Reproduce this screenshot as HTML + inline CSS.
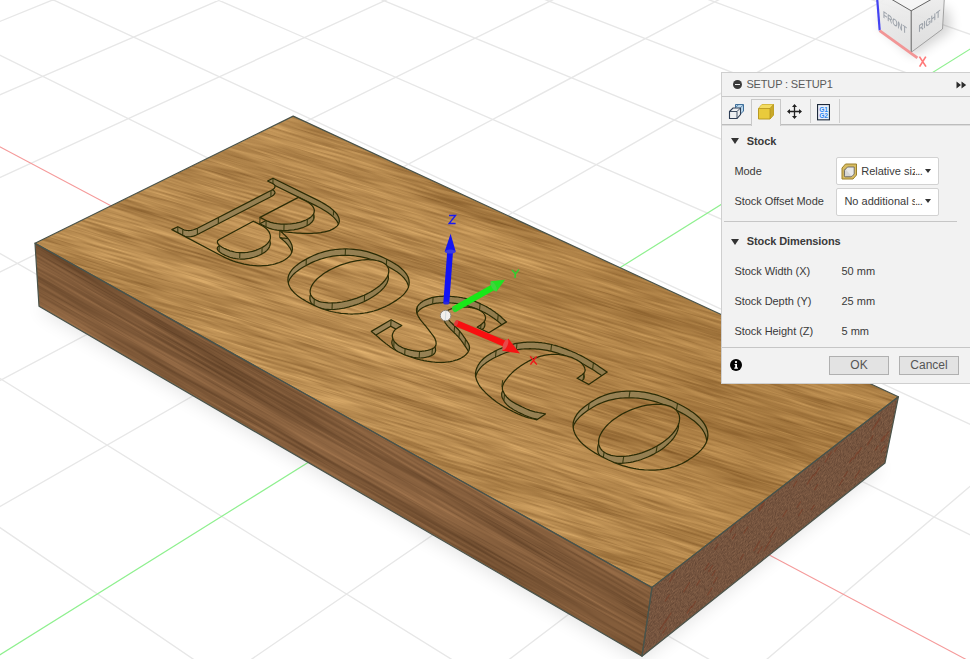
<!DOCTYPE html>
<html><head><meta charset="utf-8"><title>Setup</title>
<style>
html,body{margin:0;padding:0;background:#fff;}
body{width:970px;height:659px;position:relative;overflow:hidden;font-family:"Liberation Sans",sans-serif;}

#panel{position:absolute;left:721px;top:72px;width:260px;height:312px;background:#f2f2f2;border:1px solid #cfcfcf;box-sizing:border-box;font-size:11px;color:#333;}
#panel .title{position:absolute;left:0;top:0;right:0;height:23px;border-bottom:1px solid #c9c9c9;}
#panel .title .t{position:absolute;left:24.4px;top:5px;font-size:11px;color:#5a5a5a;letter-spacing:-0.15px;white-space:nowrap;}
#panel .minus{position:absolute;left:10.6px;top:7px;width:9px;height:9px;border-radius:50%;background:#3a3a3a;}
#panel .minus:after{content:"";position:absolute;left:2px;top:3.75px;width:5px;height:1.5px;background:#f2f2f2;}
#panel .ff{position:absolute;left:234px;top:8px;}
#panel .tabs{position:absolute;left:0;top:24px;right:0;height:27px;border-bottom:1px solid #bdbdbd;box-shadow:0 1px 0 #dcdcdc;}
#panel .tabsel{position:absolute;left:28.6px;top:2px;width:30.5px;height:27px;background:#f2f2f2;border:1px solid #c9c9c9;border-bottom:none;box-sizing:border-box;}
#panel .vsep{position:absolute;top:2px;width:1px;height:24px;background:#cfcfcf;}
#panel .ico{position:absolute;}
#panel .hdr{position:absolute;left:24.8px;font-weight:bold;font-size:11px;color:#3a3a3a;white-space:nowrap;letter-spacing:-0.1px;}
#panel .tri{position:absolute;left:8.8px;width:0;height:0;border-left:4.6px solid transparent;border-right:4.6px solid transparent;border-top:6px solid #333;}
#panel .lbl{position:absolute;left:12.4px;font-size:11px;color:#3a3a3a;white-space:nowrap;letter-spacing:-0.05px;}
#panel .val{position:absolute;left:119.5px;font-size:11px;color:#3a3a3a;white-space:nowrap;}
#panel .dd{position:absolute;left:114px;width:103px;height:27.5px;background:#fff;border:1px solid #d2d2d2;border-radius:2px;box-sizing:border-box;}
#panel .dd .tx{position:absolute;top:6.4px;font-size:11px;color:#3a3a3a;white-space:nowrap;overflow:hidden;}
#panel .dd .dots{position:absolute;top:6.4px;left:77.9px;font-size:11px;color:#3a3a3a;letter-spacing:-0.6px;}
#panel .dd .arr{position:absolute;left:88.4px;top:11.2px;width:0;height:0;border-left:3px solid transparent;border-right:3px solid transparent;border-top:4px solid #333;}
#panel .hsep{position:absolute;height:1px;background:#c6c6c6;}
#panel .btn{position:absolute;top:283px;width:60px;height:19px;background:#e3e3e3;border:1px solid #b0b0b0;box-sizing:border-box;font-size:12px;color:#555;text-align:center;line-height:17px;}
#panel .info{position:absolute;left:7.6px;top:286.4px;width:12px;height:12px;border-radius:50%;background:#000;}

</style></head><body>
<svg width="970" height="659" viewBox="0 0 970 659" style="position:absolute;left:0;top:0">
<defs>
<filter id="fTop" x="0" y="0" width="1" height="1" color-interpolation-filters="sRGB">
<feTurbulence type="fractalNoise" baseFrequency="0.30 4.2" numOctaves="2" seed="7"/>
<feColorMatrix type="matrix" values="1 0 0 0 0  1 0 0 0 0  1 0 0 0 0  0 0 0 0 1" result="fine"/>
<feTurbulence type="fractalNoise" baseFrequency="0.05 0.5" numOctaves="2" seed="23"/>
<feColorMatrix type="matrix" values="1 0 0 0 0  1 0 0 0 0  1 0 0 0 0  0 0 0 0 1" result="broad"/>
<feComposite in="fine" in2="broad" operator="arithmetic" k1="0" k2="0.55" k3="0.45" k4="0"/>
<feColorMatrix type="matrix" values="0.60 0 0 0 0.42  0.56 0 0 0 0.265  0.44 0 0 0 0.095  0 0 0 0 1"/>
</filter>
<filter id="fSide" x="0" y="0" width="1" height="1" color-interpolation-filters="sRGB">
<feTurbulence type="fractalNoise" baseFrequency="0.14 5" numOctaves="2" seed="11"/>
<feColorMatrix type="matrix" values="1 0 0 0 0  1 0 0 0 0  1 0 0 0 0  0 0 0 0 1" result="fine"/>
<feTurbulence type="fractalNoise" baseFrequency="0.03 0.7" numOctaves="2" seed="31"/>
<feColorMatrix type="matrix" values="1 0 0 0 0  1 0 0 0 0  1 0 0 0 0  0 0 0 0 1" result="broad"/>
<feComposite in="fine" in2="broad" operator="arithmetic" k1="0" k2="0.5" k3="0.5" k4="0"/>
<feColorMatrix type="matrix" values="0.50 0 0 0 0.255  0.40 0 0 0 0.155  0.30 0 0 0 0.075  0 0 0 0 1"/>
</filter>
<filter id="fEnd" x="0" y="0" width="1" height="1" color-interpolation-filters="sRGB">
<feTurbulence type="fractalNoise" baseFrequency="7 7" numOctaves="1" seed="5"/>
<feColorMatrix type="matrix" values="0.30 0 0 0 0.31  0.24 0 0 0 0.21  0.18 0 0 0 0.155  0 0 0 0 1"/>
</filter>
<filter id="gsh" x="-10%" y="-10%" width="120%" height="120%"><feGaussianBlur stdDeviation="9"/></filter>
<linearGradient id="topshade" gradientUnits="userSpaceOnUse" x1="343.5" y1="415.3" x2="595.8" y2="256.5"><stop offset="0" stop-color="#6a3c05" stop-opacity="0"/><stop offset="0.45" stop-color="#6a3c05" stop-opacity="0.03"/><stop offset="1" stop-color="#6a3c05" stop-opacity="0.17"/></linearGradient>
<clipPath id="cTop"><polygon points="35,243.2 293.2,116.1 898.4,396.8 652,587.4"/></clipPath>
<clipPath id="cSide"><polygon points="35,243.2 652,587.4 642,656.2 39,306.3"/></clipPath>
<clipPath id="cEnd"><polygon points="652,587.4 898.4,396.8 885,463 642,656.2"/></clipPath>
<linearGradient id="wallg" x1="0" y1="0" x2="1" y2="0"><stop offset="0" stop-color="#9a8458"/><stop offset="1" stop-color="#917b4c"/></linearGradient>
</defs>
<rect width="970" height="659" fill="#fff"/>
<path d="M-5 23.4L64.9 -5 M-5 96.8L231.2 -5 M-5 179.9L397.1 -5 M-5 274.4L562.6 -5 M-5 524.2L200.4 664 M-5 383.1L727.7 -5 M-5 375.4L459.1 664 M-5 509.4L892.4 -5 M-5 250.6L717.2 664 M244.6 664L975 163.3 M-5 52.7L975 537.2 M503.2 664L975 305.7 M42.7 -5L975 426.6 M761.3 664L975 482.1 M206.6 -5L975 329.5 M370.1 -5L975 243.5 M533.3 -5L975 166.8 M696 -5L975 98.1 M858.4 -5L975 36" stroke="#e7e7e7" stroke-width="1.35" fill="none"/>
<path d="M-5 144.3L975 664.2" stroke="#f59a9a" stroke-width="1.1"/>
<path d="M-5 657.9L975 46" stroke="#8ff08f" stroke-width="1.2"/>
<polygon points="37.9,304.9 640.9,657.1 882.5,463.2 291.1,175.7" fill="#000" opacity="0.10" filter="url(#gsh)" transform="translate(0 4)"/>
<!--BLOCK-->
<g clip-path="url(#cSide)"><g transform="matrix(12.0957 6.9215 -0.5467 13.2684 -51.4805 169.0417)"><rect x="0" y="0" width="60" height="8" filter="url(#fSide)"/></g></g>
<g clip-path="url(#cEnd)"><g transform="matrix(9.7180 -7.6723 -2.6812 13.5780 630.4252 589.5351)"><rect x="0" y="0" width="32" height="8" filter="url(#fEnd)"/></g></g>
<g clip-path="url(#cEnd)"><path d="M707.6 594.9L711.9 588.1 M687.1 613.2L691.4 606.3 M872.3 429.9L877.6 421.4 M708.7 571.6L712.6 565.5 M691.9 607.3L695.5 601.5 M874.7 426.6L880.1 417.9 M839.1 485.5L842.8 479.6 M807.2 484.2L813.1 474.9 M854.9 478L859.6 470.5 M814.5 489.7L817.8 484.5 M764.2 550.3L770.4 540.5 M857.7 453.6L861.3 447.8 M867.3 444.9L873 435.7 M853.4 458.9L857.5 452.4 M797.2 507.2L800.4 502 M732.3 538.8L735.2 534.1 M665.2 601.2L669.2 594.9 M782.9 516.5L786.8 510.2 M881.1 452L885 445.6 M705 569.6L708.9 563.4 M743.9 533.1L747.8 526.8 M793.6 486.1L796.7 481.2 M665.1 622.3L671 613 M798.6 515.6L802.4 509.5 M696.8 585.1L699.8 580.4 M825.2 462L831.3 452.1 M834.4 451.6L837.1 447.3 M730 532.4L735.9 523.2 M759.2 510.9L764.4 502.8 M844.2 476.7L847.4 471.5 M757.9 553.1L762 546.5 M875.4 450L878 445.9 M660.2 629.3L666.1 619.9 M740.3 559.3L743.4 554.4 M880.8 441.3L884.1 436.1 M662.8 633.2L666.3 627.6 M811.3 509.8L814.1 505.4 M770.1 537.7L776.5 527.5 M683.7 591.8L689.5 582.5 M759.5 508.4L764.1 501.1 M712.3 575.4L715.2 570.7 M753.8 550.7L759.8 541.1 M849.6 462.4L852.3 458.1 M713.6 583L717.1 577.4 M714.7 549.5L718.1 544.1 M669.6 581.6L674.7 573.4 M882.4 441.1L888.1 432 M814.1 475.9L819.5 467.3" stroke="#7a3520" stroke-width="1.25" stroke-linecap="round" opacity="0.5" fill="none"/></g>
<g clip-path="url(#cTop)"><g transform="matrix(12.1410 6.1670 10.2045 -6.1171 -82.4519 228.4906)"><g transform="rotate(15 30 16)"><rect x="-6" y="-6" width="72" height="44" filter="url(#fTop)"/></g></g></g>
<polygon points="35,243.2 293.2,116.1 898.4,396.8 652,587.4" fill="url(#topshade)"/>
<polygon points="35,243.2 652,587.4 642,656.2 39,306.3" fill="none" stroke="#4a534a" stroke-width="1.2" stroke-linejoin="round"/>
<polygon points="652,587.4 898.4,396.8 885,463 642,656.2" fill="none" stroke="#4a534a" stroke-width="1.2" stroke-linejoin="round"/>
<polygon points="35,243.2 293.2,116.1 898.4,396.8 652,587.4" fill="none" stroke="#4a534a" stroke-width="1.2" stroke-linejoin="round"/>
<!--LETTERS-->
<clipPath id="lc0"><path d="M273 178.3 L316.5 199.6 L319.1 200.9 L321.6 202.2 L323.9 203.6 L326.1 204.9 L328.1 206.3 L330 207.6 L331.7 208.9 L333.2 210.3 L334.6 211.6 L335.8 212.9 L336.9 214.2 L337.7 215.5 L338.4 216.8 L338.9 218.1 L339.2 219.3 L339.3 220.5 L339.3 221.7 L339 222.8 L338.5 224 L337.9 225 L337 226.1 L335.9 227.1 L334.6 228 L333.1 228.9 L331.6 229.7 L330.1 230.3 L328.4 230.9 L326.6 231.4 L324.8 231.8 L322.8 232.2 L320.8 232.6 L318.7 232.8 L316.5 233.1 L314.3 233.2 L312 233.3 L309.6 233.4 L307.3 233.4 L304.8 233.4 L302.4 233.3 L299.9 233.2 L297.4 233.1 L294.9 232.9 L292.4 232.7 L289.9 232.4 L287.3 232.1 L284.9 231.8 L282.4 231.5 L279.9 231.1 L281.3 232.1 L282.6 233.1 L283.8 234.2 L285.1 235.3 L286.2 236.5 L287.3 237.7 L288.3 238.9 L289.3 240.2 L290.1 241.4 L290.8 242.7 L291.4 244 L291.9 245.3 L292.2 246.7 L292.4 248 L292.4 249.3 L292.2 250.7 L291.9 252 L291.3 253.3 L290.6 254.6 L289.6 255.9 L288.4 257.1 L287 258.3 L285.3 259.5 L283.3 260.7 L281.4 261.6 L279.4 262.5 L277.3 263.2 L275.2 263.9 L272.9 264.5 L270.6 264.9 L268.1 265.3 L265.7 265.6 L263.1 265.7 L260.5 265.8 L257.9 265.8 L255.2 265.6 L252.5 265.4 L249.7 265.1 L246.9 264.6 L244.1 264.1 L241.3 263.4 L238.5 262.7 L235.7 261.8 L232.9 260.9 L230.1 259.8 L227.4 258.7 L224.6 257.4 L221.9 256 L171.9 229.6 L177.8 226.7 L182.8 229.3 L183.9 229.8 L185.2 230.2 L186.5 230.4 L188 230.5 L189.5 230.5 L191 230.3 L192.6 230 L194.2 229.5 L195.8 228.9 L197.4 228.2 L271 190.5 L272.4 189.7 L273.5 188.9 L274.3 188.2 L274.8 187.4 L275 186.7 L275 186 L274.8 185.3 L274.3 184.7 L273.5 184.1 L272.6 183.5 L267.6 181Z M260 217.4 L298.4 197.4 L305.6 201 L306.9 201.6 L308.1 202.3 L309.2 203.1 L310.1 203.8 L311 204.5 L311.8 205.3 L312.5 206.1 L313 206.9 L313.5 207.7 L313.9 208.5 L314.1 209.3 L314.3 210.1 L314.3 210.9 L314.2 211.7 L314.1 212.5 L313.8 213.3 L313.4 214.1 L312.9 214.9 L312.2 215.7 L311.5 216.4 L310.6 217.2 L309.7 217.9 L308.6 218.6 L307.4 219.3 L305.9 220 L304.4 220.6 L302.9 221.2 L301.2 221.8 L299.5 222.3 L297.8 222.7 L296 223.1 L294.1 223.4 L292.3 223.7 L290.4 223.9 L288.5 224 L286.6 224.1 L284.7 224.2 L282.8 224.1 L281 224.1 L279.1 223.9 L277.3 223.7 L275.5 223.4 L273.8 223.1 L272.1 222.7 L270.5 222.3 L269 221.7 L267.5 221.2 L266.1 220.5Z M219.7 239.2 L253.3 221.2 L261.3 225.3 L262.6 226 L263.8 226.7 L264.9 227.5 L265.9 228.3 L266.9 229.2 L267.7 230.1 L268.4 231 L269 231.9 L269.5 232.9 L269.9 233.9 L270.2 234.9 L270.4 235.9 L270.4 236.9 L270.4 237.9 L270.2 238.9 L269.8 240 L269.3 241 L268.7 242 L268 242.9 L267.1 243.9 L266.1 244.8 L264.9 245.8 L263.6 246.6 L262.1 247.5 L260.5 248.3 L258.9 249 L257.3 249.7 L255.7 250.3 L254.1 250.8 L252.5 251.3 L250.8 251.7 L249.2 252 L247.6 252.3 L245.9 252.5 L244.3 252.6 L242.7 252.7 L241.1 252.7 L239.4 252.6 L237.8 252.5 L236.2 252.3 L234.6 252 L233.1 251.6 L231.5 251.2 L229.9 250.8 L228.4 250.2 L226.9 249.6 L225.4 248.9 L223.9 248.2 L222.2 247.3 L220.7 246.3 L219.5 245.4 L218.5 244.4 L217.8 243.5 L217.4 242.6 L217.4 241.7 L217.7 240.8 L218.5 240 L219.7 239.2Z" clip-rule="evenodd"/></clipPath>
<g clip-path="url(#lc0)">
<path d="M273 178.3 L316.5 199.6 L319.1 200.9 L321.6 202.2 L323.9 203.6 L326.1 204.9 L328.1 206.3 L330 207.6 L331.7 208.9 L333.2 210.3 L334.6 211.6 L335.8 212.9 L336.9 214.2 L337.7 215.5 L338.4 216.8 L338.9 218.1 L339.2 219.3 L339.3 220.5 L339.3 221.7 L339 222.8 L338.5 224 L337.9 225 L337 226.1 L335.9 227.1 L334.6 228 L333.1 228.9 L331.6 229.7 L330.1 230.3 L328.4 230.9 L326.6 231.4 L324.8 231.8 L322.8 232.2 L320.8 232.6 L318.7 232.8 L316.5 233.1 L314.3 233.2 L312 233.3 L309.6 233.4 L307.3 233.4 L304.8 233.4 L302.4 233.3 L299.9 233.2 L297.4 233.1 L294.9 232.9 L292.4 232.7 L289.9 232.4 L287.3 232.1 L284.9 231.8 L282.4 231.5 L279.9 231.1 L281.3 232.1 L282.6 233.1 L283.8 234.2 L285.1 235.3 L286.2 236.5 L287.3 237.7 L288.3 238.9 L289.3 240.2 L290.1 241.4 L290.8 242.7 L291.4 244 L291.9 245.3 L292.2 246.7 L292.4 248 L292.4 249.3 L292.2 250.7 L291.9 252 L291.3 253.3 L290.6 254.6 L289.6 255.9 L288.4 257.1 L287 258.3 L285.3 259.5 L283.3 260.7 L281.4 261.6 L279.4 262.5 L277.3 263.2 L275.2 263.9 L272.9 264.5 L270.6 264.9 L268.1 265.3 L265.7 265.6 L263.1 265.7 L260.5 265.8 L257.9 265.8 L255.2 265.6 L252.5 265.4 L249.7 265.1 L246.9 264.6 L244.1 264.1 L241.3 263.4 L238.5 262.7 L235.7 261.8 L232.9 260.9 L230.1 259.8 L227.4 258.7 L224.6 257.4 L221.9 256 L171.9 229.6 L177.8 226.7 L182.8 229.3 L183.9 229.8 L185.2 230.2 L186.5 230.4 L188 230.5 L189.5 230.5 L191 230.3 L192.6 230 L194.2 229.5 L195.8 228.9 L197.4 228.2 L271 190.5 L272.4 189.7 L273.5 188.9 L274.3 188.2 L274.8 187.4 L275 186.7 L275 186 L274.8 185.3 L274.3 184.7 L273.5 184.1 L272.6 183.5 L267.6 181Z M260 217.4 L298.4 197.4 L305.6 201 L306.9 201.6 L308.1 202.3 L309.2 203.1 L310.1 203.8 L311 204.5 L311.8 205.3 L312.5 206.1 L313 206.9 L313.5 207.7 L313.9 208.5 L314.1 209.3 L314.3 210.1 L314.3 210.9 L314.2 211.7 L314.1 212.5 L313.8 213.3 L313.4 214.1 L312.9 214.9 L312.2 215.7 L311.5 216.4 L310.6 217.2 L309.7 217.9 L308.6 218.6 L307.4 219.3 L305.9 220 L304.4 220.6 L302.9 221.2 L301.2 221.8 L299.5 222.3 L297.8 222.7 L296 223.1 L294.1 223.4 L292.3 223.7 L290.4 223.9 L288.5 224 L286.6 224.1 L284.7 224.2 L282.8 224.1 L281 224.1 L279.1 223.9 L277.3 223.7 L275.5 223.4 L273.8 223.1 L272.1 222.7 L270.5 222.3 L269 221.7 L267.5 221.2 L266.1 220.5Z M219.7 239.2 L253.3 221.2 L261.3 225.3 L262.6 226 L263.8 226.7 L264.9 227.5 L265.9 228.3 L266.9 229.2 L267.7 230.1 L268.4 231 L269 231.9 L269.5 232.9 L269.9 233.9 L270.2 234.9 L270.4 235.9 L270.4 236.9 L270.4 237.9 L270.2 238.9 L269.8 240 L269.3 241 L268.7 242 L268 242.9 L267.1 243.9 L266.1 244.8 L264.9 245.8 L263.6 246.6 L262.1 247.5 L260.5 248.3 L258.9 249 L257.3 249.7 L255.7 250.3 L254.1 250.8 L252.5 251.3 L250.8 251.7 L249.2 252 L247.6 252.3 L245.9 252.5 L244.3 252.6 L242.7 252.7 L241.1 252.7 L239.4 252.6 L237.8 252.5 L236.2 252.3 L234.6 252 L233.1 251.6 L231.5 251.2 L229.9 250.8 L228.4 250.2 L226.9 249.6 L225.4 248.9 L223.9 248.2 L222.2 247.3 L220.7 246.3 L219.5 245.4 L218.5 244.4 L217.8 243.5 L217.4 242.6 L217.4 241.7 L217.7 240.8 L218.5 240 L219.7 239.2Z M272.9 184.5 L316.3 205.9 L318.9 207.2 L321.3 208.5 L323.7 209.9 L325.8 211.2 L327.8 212.6 L329.7 213.9 L331.4 215.3 L332.9 216.6 L334.3 217.9 L335.5 219.3 L336.6 220.6 L337.4 221.9 L338.1 223.2 L338.6 224.4 L338.9 225.6 L339 226.9 L339 228 L338.7 229.2 L338.2 230.3 L337.6 231.4 L336.7 232.4 L335.6 233.4 L334.3 234.4 L332.8 235.3 L331.3 236 L329.8 236.7 L328.1 237.2 L326.4 237.8 L324.5 238.2 L322.6 238.6 L320.5 238.9 L318.4 239.2 L316.3 239.4 L314 239.6 L311.7 239.7 L309.4 239.8 L307 239.8 L304.6 239.8 L302.1 239.7 L299.7 239.6 L297.2 239.5 L294.7 239.3 L292.2 239.1 L289.6 238.8 L287.1 238.5 L284.7 238.2 L282.2 237.9 L279.7 237.5 L281.1 238.5 L282.4 239.5 L283.6 240.6 L284.9 241.7 L286 242.9 L287.1 244.1 L288.1 245.3 L289 246.6 L289.9 247.8 L290.6 249.1 L291.2 250.4 L291.7 251.8 L292 253.1 L292.2 254.4 L292.2 255.8 L292 257.1 L291.7 258.4 L291.1 259.7 L290.4 261 L289.4 262.3 L288.2 263.6 L286.7 264.8 L285.1 266 L283.1 267.1 L281.2 268.1 L279.2 268.9 L277.1 269.7 L275 270.4 L272.7 270.9 L270.4 271.4 L268 271.8 L265.5 272 L263 272.2 L260.4 272.3 L257.7 272.2 L255 272.1 L252.3 271.9 L249.6 271.5 L246.8 271.1 L244 270.5 L241.2 269.9 L238.4 269.1 L235.6 268.3 L232.8 267.3 L230 266.3 L227.3 265.1 L224.5 263.8 L221.8 262.5 L171.9 236 L177.8 233 L182.7 235.7 L183.9 236.2 L185.2 236.5 L186.5 236.8 L187.9 236.9 L189.4 236.8 L191 236.7 L192.6 236.3 L194.2 235.9 L195.8 235.3 L197.4 234.5 L270.9 196.7 L272.2 196 L273.3 195.2 L274.1 194.4 L274.6 193.7 L274.9 193 L274.9 192.2 L274.6 191.6 L274.1 190.9 L273.4 190.3 L272.4 189.7 L267.4 187.3Z M259.8 223.7 L298.2 203.7 L305.4 207.3 L306.7 207.9 L307.8 208.6 L308.9 209.4 L309.9 210.1 L310.8 210.8 L311.6 211.6 L312.2 212.4 L312.8 213.2 L313.3 214 L313.6 214.8 L313.9 215.6 L314 216.4 L314.1 217.2 L314 218 L313.8 218.8 L313.5 219.6 L313.1 220.4 L312.6 221.2 L312 222 L311.2 222.7 L310.4 223.5 L309.4 224.2 L308.3 224.9 L307.1 225.6 L305.7 226.3 L304.2 227 L302.6 227.6 L301 228.1 L299.3 228.6 L297.5 229.1 L295.7 229.4 L293.9 229.8 L292.1 230 L290.2 230.2 L288.3 230.4 L286.4 230.5 L284.5 230.5 L282.6 230.5 L280.8 230.4 L278.9 230.3 L277.1 230.1 L275.3 229.8 L273.6 229.5 L272 229.1 L270.4 228.6 L268.8 228.1 L267.4 227.5 L266 226.9Z M219.6 245.6 L253.2 227.5 L261.1 231.6 L262.4 232.3 L263.6 233.1 L264.7 233.9 L265.8 234.7 L266.7 235.6 L267.5 236.5 L268.2 237.4 L268.9 238.3 L269.4 239.3 L269.8 240.3 L270 241.3 L270.2 242.3 L270.3 243.3 L270.2 244.3 L270 245.3 L269.6 246.4 L269.2 247.4 L268.6 248.4 L267.8 249.3 L266.9 250.3 L265.9 251.3 L264.7 252.2 L263.4 253.1 L261.9 253.9 L260.3 254.7 L258.7 255.5 L257.2 256.1 L255.5 256.7 L253.9 257.3 L252.3 257.7 L250.7 258.1 L249.1 258.5 L247.4 258.7 L245.8 258.9 L244.2 259.1 L242.6 259.1 L240.9 259.1 L239.3 259 L237.7 258.9 L236.1 258.7 L234.5 258.4 L233 258.1 L231.4 257.7 L229.8 257.2 L228.3 256.6 L226.8 256 L225.3 255.4 L223.8 254.6 L222.1 253.7 L220.6 252.7 L219.4 251.8 L218.4 250.8 L217.7 249.9 L217.3 249 L217.3 248.1 L217.6 247.2 L218.4 246.4 L219.6 245.6Z" fill-rule="evenodd" fill="url(#wallg)"/>
<path d="M272.9 184.5 L316.3 205.9 L318.9 207.2 L321.3 208.5 L323.7 209.9 L325.8 211.2 L327.8 212.6 L329.7 213.9 L331.4 215.3 L332.9 216.6 L334.3 217.9 L335.5 219.3 L336.6 220.6 L337.4 221.9 L338.1 223.2 L338.6 224.4 L338.9 225.6 L339 226.9 L339 228 L338.7 229.2 L338.2 230.3 L337.6 231.4 L336.7 232.4 L335.6 233.4 L334.3 234.4 L332.8 235.3 L331.3 236 L329.8 236.7 L328.1 237.2 L326.4 237.8 L324.5 238.2 L322.6 238.6 L320.5 238.9 L318.4 239.2 L316.3 239.4 L314 239.6 L311.7 239.7 L309.4 239.8 L307 239.8 L304.6 239.8 L302.1 239.7 L299.7 239.6 L297.2 239.5 L294.7 239.3 L292.2 239.1 L289.6 238.8 L287.1 238.5 L284.7 238.2 L282.2 237.9 L279.7 237.5 L281.1 238.5 L282.4 239.5 L283.6 240.6 L284.9 241.7 L286 242.9 L287.1 244.1 L288.1 245.3 L289 246.6 L289.9 247.8 L290.6 249.1 L291.2 250.4 L291.7 251.8 L292 253.1 L292.2 254.4 L292.2 255.8 L292 257.1 L291.7 258.4 L291.1 259.7 L290.4 261 L289.4 262.3 L288.2 263.6 L286.7 264.8 L285.1 266 L283.1 267.1 L281.2 268.1 L279.2 268.9 L277.1 269.7 L275 270.4 L272.7 270.9 L270.4 271.4 L268 271.8 L265.5 272 L263 272.2 L260.4 272.3 L257.7 272.2 L255 272.1 L252.3 271.9 L249.6 271.5 L246.8 271.1 L244 270.5 L241.2 269.9 L238.4 269.1 L235.6 268.3 L232.8 267.3 L230 266.3 L227.3 265.1 L224.5 263.8 L221.8 262.5 L171.9 236 L177.8 233 L182.7 235.7 L183.9 236.2 L185.2 236.5 L186.5 236.8 L187.9 236.9 L189.4 236.8 L191 236.7 L192.6 236.3 L194.2 235.9 L195.8 235.3 L197.4 234.5 L270.9 196.7 L272.2 196 L273.3 195.2 L274.1 194.4 L274.6 193.7 L274.9 193 L274.9 192.2 L274.6 191.6 L274.1 190.9 L273.4 190.3 L272.4 189.7 L267.4 187.3Z M259.8 223.7 L298.2 203.7 L305.4 207.3 L306.7 207.9 L307.8 208.6 L308.9 209.4 L309.9 210.1 L310.8 210.8 L311.6 211.6 L312.2 212.4 L312.8 213.2 L313.3 214 L313.6 214.8 L313.9 215.6 L314 216.4 L314.1 217.2 L314 218 L313.8 218.8 L313.5 219.6 L313.1 220.4 L312.6 221.2 L312 222 L311.2 222.7 L310.4 223.5 L309.4 224.2 L308.3 224.9 L307.1 225.6 L305.7 226.3 L304.2 227 L302.6 227.6 L301 228.1 L299.3 228.6 L297.5 229.1 L295.7 229.4 L293.9 229.8 L292.1 230 L290.2 230.2 L288.3 230.4 L286.4 230.5 L284.5 230.5 L282.6 230.5 L280.8 230.4 L278.9 230.3 L277.1 230.1 L275.3 229.8 L273.6 229.5 L272 229.1 L270.4 228.6 L268.8 228.1 L267.4 227.5 L266 226.9Z M219.6 245.6 L253.2 227.5 L261.1 231.6 L262.4 232.3 L263.6 233.1 L264.7 233.9 L265.8 234.7 L266.7 235.6 L267.5 236.5 L268.2 237.4 L268.9 238.3 L269.4 239.3 L269.8 240.3 L270 241.3 L270.2 242.3 L270.3 243.3 L270.2 244.3 L270 245.3 L269.6 246.4 L269.2 247.4 L268.6 248.4 L267.8 249.3 L266.9 250.3 L265.9 251.3 L264.7 252.2 L263.4 253.1 L261.9 253.9 L260.3 254.7 L258.7 255.5 L257.2 256.1 L255.5 256.7 L253.9 257.3 L252.3 257.7 L250.7 258.1 L249.1 258.5 L247.4 258.7 L245.8 258.9 L244.2 259.1 L242.6 259.1 L240.9 259.1 L239.3 259 L237.7 258.9 L236.1 258.7 L234.5 258.4 L233 258.1 L231.4 257.7 L229.8 257.2 L228.3 256.6 L226.8 256 L225.3 255.4 L223.8 254.6 L222.1 253.7 L220.6 252.7 L219.4 251.8 L218.4 250.8 L217.7 249.9 L217.3 249 L217.3 248.1 L217.6 247.2 L218.4 246.4 L219.6 245.6Z" fill="none" stroke="#2b2c06" stroke-width="1.2"/>
<path d="M273 178.3L272.9 184.5 M267.6 181L267.4 187.3 M177.8 226.7L177.8 233 M182.8 229.3L182.7 235.7 M197.4 228.2L197.4 234.5 M218.4 217.4L218.3 223.8 M271 190.5L270.9 196.7 M333.6 209.2L333.4 215.5 M333.1 228.9L332.8 235.3 M279.9 231.1L279.7 237.5 M260 217.4L259.8 223.7 M266.1 220.5L266 226.9 M284.1 223.8L283.9 230.1 M307.4 219.3L307.1 225.6 M313.8 213.7L313.5 220 M219.7 239.2L219.6 245.6 M219.2 245.1L219.1 251.5 M239.9 251.7L239.7 258.1 M262.1 247.5L261.9 253.9 M253.3 221.2L253.2 227.5" fill="none" stroke="#3a3a10" stroke-width="1.1"/>
</g>
<path d="M273 178.3 L316.5 199.6 L319.1 200.9 L321.6 202.2 L323.9 203.6 L326.1 204.9 L328.1 206.3 L330 207.6 L331.7 208.9 L333.2 210.3 L334.6 211.6 L335.8 212.9 L336.9 214.2 L337.7 215.5 L338.4 216.8 L338.9 218.1 L339.2 219.3 L339.3 220.5 L339.3 221.7 L339 222.8 L338.5 224 L337.9 225 L337 226.1 L335.9 227.1 L334.6 228 L333.1 228.9 L331.6 229.7 L330.1 230.3 L328.4 230.9 L326.6 231.4 L324.8 231.8 L322.8 232.2 L320.8 232.6 L318.7 232.8 L316.5 233.1 L314.3 233.2 L312 233.3 L309.6 233.4 L307.3 233.4 L304.8 233.4 L302.4 233.3 L299.9 233.2 L297.4 233.1 L294.9 232.9 L292.4 232.7 L289.9 232.4 L287.3 232.1 L284.9 231.8 L282.4 231.5 L279.9 231.1 L281.3 232.1 L282.6 233.1 L283.8 234.2 L285.1 235.3 L286.2 236.5 L287.3 237.7 L288.3 238.9 L289.3 240.2 L290.1 241.4 L290.8 242.7 L291.4 244 L291.9 245.3 L292.2 246.7 L292.4 248 L292.4 249.3 L292.2 250.7 L291.9 252 L291.3 253.3 L290.6 254.6 L289.6 255.9 L288.4 257.1 L287 258.3 L285.3 259.5 L283.3 260.7 L281.4 261.6 L279.4 262.5 L277.3 263.2 L275.2 263.9 L272.9 264.5 L270.6 264.9 L268.1 265.3 L265.7 265.6 L263.1 265.7 L260.5 265.8 L257.9 265.8 L255.2 265.6 L252.5 265.4 L249.7 265.1 L246.9 264.6 L244.1 264.1 L241.3 263.4 L238.5 262.7 L235.7 261.8 L232.9 260.9 L230.1 259.8 L227.4 258.7 L224.6 257.4 L221.9 256 L171.9 229.6 L177.8 226.7 L182.8 229.3 L183.9 229.8 L185.2 230.2 L186.5 230.4 L188 230.5 L189.5 230.5 L191 230.3 L192.6 230 L194.2 229.5 L195.8 228.9 L197.4 228.2 L271 190.5 L272.4 189.7 L273.5 188.9 L274.3 188.2 L274.8 187.4 L275 186.7 L275 186 L274.8 185.3 L274.3 184.7 L273.5 184.1 L272.6 183.5 L267.6 181Z M260 217.4 L298.4 197.4 L305.6 201 L306.9 201.6 L308.1 202.3 L309.2 203.1 L310.1 203.8 L311 204.5 L311.8 205.3 L312.5 206.1 L313 206.9 L313.5 207.7 L313.9 208.5 L314.1 209.3 L314.3 210.1 L314.3 210.9 L314.2 211.7 L314.1 212.5 L313.8 213.3 L313.4 214.1 L312.9 214.9 L312.2 215.7 L311.5 216.4 L310.6 217.2 L309.7 217.9 L308.6 218.6 L307.4 219.3 L305.9 220 L304.4 220.6 L302.9 221.2 L301.2 221.8 L299.5 222.3 L297.8 222.7 L296 223.1 L294.1 223.4 L292.3 223.7 L290.4 223.9 L288.5 224 L286.6 224.1 L284.7 224.2 L282.8 224.1 L281 224.1 L279.1 223.9 L277.3 223.7 L275.5 223.4 L273.8 223.1 L272.1 222.7 L270.5 222.3 L269 221.7 L267.5 221.2 L266.1 220.5Z M219.7 239.2 L253.3 221.2 L261.3 225.3 L262.6 226 L263.8 226.7 L264.9 227.5 L265.9 228.3 L266.9 229.2 L267.7 230.1 L268.4 231 L269 231.9 L269.5 232.9 L269.9 233.9 L270.2 234.9 L270.4 235.9 L270.4 236.9 L270.4 237.9 L270.2 238.9 L269.8 240 L269.3 241 L268.7 242 L268 242.9 L267.1 243.9 L266.1 244.8 L264.9 245.8 L263.6 246.6 L262.1 247.5 L260.5 248.3 L258.9 249 L257.3 249.7 L255.7 250.3 L254.1 250.8 L252.5 251.3 L250.8 251.7 L249.2 252 L247.6 252.3 L245.9 252.5 L244.3 252.6 L242.7 252.7 L241.1 252.7 L239.4 252.6 L237.8 252.5 L236.2 252.3 L234.6 252 L233.1 251.6 L231.5 251.2 L229.9 250.8 L228.4 250.2 L226.9 249.6 L225.4 248.9 L223.9 248.2 L222.2 247.3 L220.7 246.3 L219.5 245.4 L218.5 244.4 L217.8 243.5 L217.4 242.6 L217.4 241.7 L217.7 240.8 L218.5 240 L219.7 239.2Z" fill="none" stroke="#2b2c06" stroke-width="1.25" stroke-linejoin="round"/>
<clipPath id="lc1"><path d="M392 303 L394.6 301.4 L396.7 300.1 L398.5 298.8 L400.2 297.6 L401.6 296.4 L403 295.1 L404.2 293.9 L405.2 292.7 L406.1 291.4 L407 290.2 L407.6 289 L408.2 287.7 L408.6 286.5 L408.9 285.2 L409.1 284 L409.2 282.7 L409.1 281.5 L409 280.2 L408.7 279 L408.3 277.7 L407.8 276.5 L407.1 275.2 L406.4 274 L405.5 272.8 L404.5 271.6 L403.4 270.4 L402.1 269.2 L400.8 268 L399.3 266.8 L397.7 265.6 L395.9 264.4 L394 263.2 L391.9 262 L389.6 260.7 L386.7 259.2 L383.7 257.8 L381.2 256.6 L378.8 255.6 L376.4 254.7 L374.1 253.8 L371.9 253.1 L369.6 252.4 L367.3 251.7 L365 251.2 L362.7 250.7 L360.4 250.2 L358.1 249.9 L355.9 249.6 L353.6 249.3 L351.3 249.1 L349 249 L346.7 248.9 L344.4 248.9 L342.1 249 L339.9 249.1 L337.6 249.3 L335.4 249.5 L333.1 249.8 L330.9 250.2 L328.7 250.6 L326.5 251.1 L324.3 251.7 L322.2 252.3 L320 253 L317.9 253.7 L315.7 254.6 L313.5 255.5 L311.4 256.5 L309.1 257.6 L306.3 259.1 L303.7 260.6 L301.6 261.8 L299.7 263 L298 264.2 L296.5 265.4 L295.1 266.6 L293.8 267.8 L292.7 268.9 L291.7 270.1 L290.8 271.3 L290 272.6 L289.4 273.8 L288.8 275 L288.4 276.2 L288.1 277.5 L288 278.7 L287.9 280 L288 281.2 L288.2 282.5 L288.5 283.7 L288.9 285 L289.4 286.3 L290.1 287.5 L290.9 288.8 L291.8 290 L292.8 291.2 L294 292.5 L295.3 293.7 L296.7 294.9 L298.3 296.2 L300 297.4 L301.9 298.7 L303.9 299.9 L306.2 301.3 L309.2 302.9 L312.2 304.4 L314.7 305.6 L317.2 306.7 L319.5 307.7 L321.9 308.6 L324.3 309.5 L326.6 310.2 L329 310.9 L331.3 311.5 L333.7 312 L336.1 312.5 L338.5 312.9 L340.9 313.3 L343.2 313.5 L345.6 313.7 L348 313.9 L350.4 314 L352.8 314 L355.2 313.9 L357.6 313.8 L359.9 313.6 L362.3 313.3 L364.6 313 L366.9 312.6 L369.2 312.1 L371.5 311.6 L373.7 311 L375.9 310.3 L378.2 309.6 L380.4 308.7 L382.5 307.8 L384.7 306.9 L387 305.8 L389.3 304.6Z M370.8 291.8 L372.8 290.6 L374.8 289.3 L376.6 288 L378.3 286.7 L380 285.4 L381.5 284 L382.8 282.7 L384.1 281.3 L385.2 280 L386.1 278.6 L387 277.3 L387.6 276 L388.1 274.7 L388.5 273.4 L388.7 272.2 L388.8 271 L388.7 269.8 L388.5 268.7 L388.1 267.6 L387.5 266.6 L386.8 265.6 L386 264.8 L385 263.9 L383.9 263.2 L382.7 262.5 L381.3 261.9 L379.8 261.3 L378.2 260.8 L376.5 260.5 L374.6 260.1 L372.7 259.9 L370.7 259.8 L368.6 259.7 L366.5 259.7 L364.2 259.8 L362 260 L359.6 260.3 L357.3 260.6 L354.9 261.1 L352.4 261.6 L350 262.2 L347.6 262.8 L345.1 263.6 L342.7 264.3 L340.3 265.2 L338 266.1 L335.6 267.1 L333.4 268.2 L331.2 269.3 L329 270.4 L327 271.6 L325 272.8 L323.1 274.1 L321.4 275.4 L319.7 276.7 L318.1 278 L316.7 279.3 L315.4 280.7 L314.2 282.1 L313.2 283.4 L312.3 284.8 L311.6 286.1 L311 287.4 L310.6 288.7 L310.3 290 L310.1 291.2 L310.2 292.4 L310.4 293.6 L310.7 294.7 L311.2 295.7 L311.9 296.7 L312.7 297.7 L313.6 298.5 L314.7 299.3 L316 300 L317.3 300.7 L318.9 301.3 L320.5 301.8 L322.2 302.2 L324.1 302.5 L326.1 302.7 L328.1 302.9 L330.3 303 L332.5 302.9 L334.8 302.8 L337.2 302.6 L339.6 302.3 L342 302 L344.5 301.5 L347 301 L349.5 300.4 L352 299.7 L354.5 298.9 L356.9 298.1 L359.4 297.2 L361.8 296.2 L364.1 295.2 L366.4 294.1 L368.6 293Z" clip-rule="evenodd"/></clipPath>
<g clip-path="url(#lc1)">
<path d="M392 303 L394.6 301.4 L396.7 300.1 L398.5 298.8 L400.2 297.6 L401.6 296.4 L403 295.1 L404.2 293.9 L405.2 292.7 L406.1 291.4 L407 290.2 L407.6 289 L408.2 287.7 L408.6 286.5 L408.9 285.2 L409.1 284 L409.2 282.7 L409.1 281.5 L409 280.2 L408.7 279 L408.3 277.7 L407.8 276.5 L407.1 275.2 L406.4 274 L405.5 272.8 L404.5 271.6 L403.4 270.4 L402.1 269.2 L400.8 268 L399.3 266.8 L397.7 265.6 L395.9 264.4 L394 263.2 L391.9 262 L389.6 260.7 L386.7 259.2 L383.7 257.8 L381.2 256.6 L378.8 255.6 L376.4 254.7 L374.1 253.8 L371.9 253.1 L369.6 252.4 L367.3 251.7 L365 251.2 L362.7 250.7 L360.4 250.2 L358.1 249.9 L355.9 249.6 L353.6 249.3 L351.3 249.1 L349 249 L346.7 248.9 L344.4 248.9 L342.1 249 L339.9 249.1 L337.6 249.3 L335.4 249.5 L333.1 249.8 L330.9 250.2 L328.7 250.6 L326.5 251.1 L324.3 251.7 L322.2 252.3 L320 253 L317.9 253.7 L315.7 254.6 L313.5 255.5 L311.4 256.5 L309.1 257.6 L306.3 259.1 L303.7 260.6 L301.6 261.8 L299.7 263 L298 264.2 L296.5 265.4 L295.1 266.6 L293.8 267.8 L292.7 268.9 L291.7 270.1 L290.8 271.3 L290 272.6 L289.4 273.8 L288.8 275 L288.4 276.2 L288.1 277.5 L288 278.7 L287.9 280 L288 281.2 L288.2 282.5 L288.5 283.7 L288.9 285 L289.4 286.3 L290.1 287.5 L290.9 288.8 L291.8 290 L292.8 291.2 L294 292.5 L295.3 293.7 L296.7 294.9 L298.3 296.2 L300 297.4 L301.9 298.7 L303.9 299.9 L306.2 301.3 L309.2 302.9 L312.2 304.4 L314.7 305.6 L317.2 306.7 L319.5 307.7 L321.9 308.6 L324.3 309.5 L326.6 310.2 L329 310.9 L331.3 311.5 L333.7 312 L336.1 312.5 L338.5 312.9 L340.9 313.3 L343.2 313.5 L345.6 313.7 L348 313.9 L350.4 314 L352.8 314 L355.2 313.9 L357.6 313.8 L359.9 313.6 L362.3 313.3 L364.6 313 L366.9 312.6 L369.2 312.1 L371.5 311.6 L373.7 311 L375.9 310.3 L378.2 309.6 L380.4 308.7 L382.5 307.8 L384.7 306.9 L387 305.8 L389.3 304.6Z M370.8 291.8 L372.8 290.6 L374.8 289.3 L376.6 288 L378.3 286.7 L380 285.4 L381.5 284 L382.8 282.7 L384.1 281.3 L385.2 280 L386.1 278.6 L387 277.3 L387.6 276 L388.1 274.7 L388.5 273.4 L388.7 272.2 L388.8 271 L388.7 269.8 L388.5 268.7 L388.1 267.6 L387.5 266.6 L386.8 265.6 L386 264.8 L385 263.9 L383.9 263.2 L382.7 262.5 L381.3 261.9 L379.8 261.3 L378.2 260.8 L376.5 260.5 L374.6 260.1 L372.7 259.9 L370.7 259.8 L368.6 259.7 L366.5 259.7 L364.2 259.8 L362 260 L359.6 260.3 L357.3 260.6 L354.9 261.1 L352.4 261.6 L350 262.2 L347.6 262.8 L345.1 263.6 L342.7 264.3 L340.3 265.2 L338 266.1 L335.6 267.1 L333.4 268.2 L331.2 269.3 L329 270.4 L327 271.6 L325 272.8 L323.1 274.1 L321.4 275.4 L319.7 276.7 L318.1 278 L316.7 279.3 L315.4 280.7 L314.2 282.1 L313.2 283.4 L312.3 284.8 L311.6 286.1 L311 287.4 L310.6 288.7 L310.3 290 L310.1 291.2 L310.2 292.4 L310.4 293.6 L310.7 294.7 L311.2 295.7 L311.9 296.7 L312.7 297.7 L313.6 298.5 L314.7 299.3 L316 300 L317.3 300.7 L318.9 301.3 L320.5 301.8 L322.2 302.2 L324.1 302.5 L326.1 302.7 L328.1 302.9 L330.3 303 L332.5 302.9 L334.8 302.8 L337.2 302.6 L339.6 302.3 L342 302 L344.5 301.5 L347 301 L349.5 300.4 L352 299.7 L354.5 298.9 L356.9 298.1 L359.4 297.2 L361.8 296.2 L364.1 295.2 L366.4 294.1 L368.6 293Z M391.6 309.6 L394.2 308 L396.3 306.6 L398.1 305.4 L399.7 304.1 L401.2 302.9 L402.5 301.7 L403.7 300.4 L404.8 299.2 L405.7 298 L406.5 296.7 L407.2 295.5 L407.7 294.2 L408.2 293 L408.5 291.7 L408.7 290.5 L408.7 289.2 L408.7 288 L408.5 286.7 L408.2 285.4 L407.8 284.2 L407.3 283 L406.7 281.7 L405.9 280.5 L405 279.3 L404 278 L402.9 276.8 L401.7 275.6 L400.3 274.4 L398.9 273.2 L397.3 272 L395.5 270.9 L393.6 269.7 L391.5 268.5 L389.2 267.2 L386.3 265.7 L383.3 264.2 L380.8 263.1 L378.4 262 L376.1 261.1 L373.8 260.3 L371.5 259.5 L369.2 258.8 L366.9 258.2 L364.7 257.6 L362.4 257.1 L360.1 256.7 L357.8 256.3 L355.5 256 L353.2 255.7 L350.9 255.5 L348.7 255.4 L346.4 255.3 L344.1 255.3 L341.8 255.4 L339.6 255.5 L337.3 255.7 L335.1 255.9 L332.8 256.2 L330.6 256.6 L328.4 257 L326.2 257.5 L324 258.1 L321.9 258.7 L319.7 259.4 L317.6 260.2 L315.4 261 L313.3 261.9 L311.1 262.9 L308.8 264.1 L306.1 265.5 L303.4 267 L301.3 268.3 L299.5 269.5 L297.8 270.7 L296.3 271.9 L294.9 273 L293.6 274.2 L292.5 275.4 L291.5 276.6 L290.6 277.8 L289.8 279 L289.2 280.3 L288.6 281.5 L288.2 282.7 L287.9 284 L287.8 285.2 L287.7 286.5 L287.8 287.7 L287.9 289 L288.3 290.2 L288.7 291.5 L289.2 292.8 L289.9 294 L290.7 295.3 L291.6 296.5 L292.6 297.8 L293.8 299 L295.1 300.2 L296.5 301.5 L298.1 302.7 L299.8 304 L301.6 305.2 L303.7 306.5 L306 307.8 L308.9 309.4 L311.9 311 L314.5 312.2 L316.9 313.3 L319.3 314.3 L321.6 315.2 L324 316 L326.3 316.8 L328.7 317.5 L331 318.1 L333.4 318.6 L335.8 319.1 L338.1 319.5 L340.5 319.8 L342.9 320.1 L345.3 320.3 L347.7 320.5 L350.1 320.5 L352.5 320.5 L354.8 320.5 L357.2 320.3 L359.6 320.1 L361.9 319.9 L364.2 319.5 L366.5 319.1 L368.8 318.7 L371.1 318.1 L373.3 317.5 L375.5 316.9 L377.8 316.1 L379.9 315.3 L382.1 314.4 L384.3 313.4 L386.5 312.3 L388.8 311.1Z M370.4 298.3 L372.4 297.1 L374.4 295.8 L376.2 294.5 L377.9 293.2 L379.6 291.9 L381.1 290.5 L382.4 289.2 L383.7 287.8 L384.8 286.5 L385.7 285.1 L386.6 283.8 L387.2 282.5 L387.7 281.1 L388.1 279.9 L388.3 278.6 L388.4 277.4 L388.3 276.3 L388 275.1 L387.6 274.1 L387.1 273.1 L386.4 272.1 L385.6 271.2 L384.6 270.4 L383.5 269.6 L382.3 268.9 L380.9 268.3 L379.4 267.8 L377.8 267.3 L376.1 266.9 L374.3 266.6 L372.4 266.4 L370.3 266.2 L368.3 266.2 L366.1 266.2 L363.9 266.3 L361.6 266.5 L359.3 266.7 L356.9 267.1 L354.5 267.5 L352.1 268 L349.7 268.6 L347.2 269.3 L344.8 270 L342.4 270.8 L340 271.7 L337.7 272.6 L335.3 273.6 L333.1 274.6 L330.9 275.7 L328.8 276.9 L326.7 278.1 L324.7 279.3 L322.9 280.5 L321.1 281.8 L319.4 283.2 L317.9 284.5 L316.4 285.8 L315.1 287.2 L314 288.6 L312.9 289.9 L312.1 291.3 L311.3 292.6 L310.7 293.9 L310.3 295.2 L310 296.5 L309.9 297.7 L309.9 298.9 L310.1 300.1 L310.4 301.2 L310.9 302.3 L311.6 303.3 L312.4 304.2 L313.4 305.1 L314.5 305.9 L315.7 306.6 L317.1 307.2 L318.6 307.8 L320.2 308.3 L322 308.7 L323.8 309 L325.8 309.3 L327.8 309.4 L330 309.5 L332.2 309.5 L334.5 309.4 L336.8 309.2 L339.2 308.9 L341.7 308.5 L344.2 308.1 L346.6 307.5 L349.1 306.9 L351.6 306.2 L354.1 305.4 L356.6 304.6 L359 303.7 L361.4 302.7 L363.8 301.7 L366 300.6 L368.2 299.5Z" fill-rule="evenodd" fill="url(#wallg)"/>
<path d="M391.6 309.6 L394.2 308 L396.3 306.6 L398.1 305.4 L399.7 304.1 L401.2 302.9 L402.5 301.7 L403.7 300.4 L404.8 299.2 L405.7 298 L406.5 296.7 L407.2 295.5 L407.7 294.2 L408.2 293 L408.5 291.7 L408.7 290.5 L408.7 289.2 L408.7 288 L408.5 286.7 L408.2 285.4 L407.8 284.2 L407.3 283 L406.7 281.7 L405.9 280.5 L405 279.3 L404 278 L402.9 276.8 L401.7 275.6 L400.3 274.4 L398.9 273.2 L397.3 272 L395.5 270.9 L393.6 269.7 L391.5 268.5 L389.2 267.2 L386.3 265.7 L383.3 264.2 L380.8 263.1 L378.4 262 L376.1 261.1 L373.8 260.3 L371.5 259.5 L369.2 258.8 L366.9 258.2 L364.7 257.6 L362.4 257.1 L360.1 256.7 L357.8 256.3 L355.5 256 L353.2 255.7 L350.9 255.5 L348.7 255.4 L346.4 255.3 L344.1 255.3 L341.8 255.4 L339.6 255.5 L337.3 255.7 L335.1 255.9 L332.8 256.2 L330.6 256.6 L328.4 257 L326.2 257.5 L324 258.1 L321.9 258.7 L319.7 259.4 L317.6 260.2 L315.4 261 L313.3 261.9 L311.1 262.9 L308.8 264.1 L306.1 265.5 L303.4 267 L301.3 268.3 L299.5 269.5 L297.8 270.7 L296.3 271.9 L294.9 273 L293.6 274.2 L292.5 275.4 L291.5 276.6 L290.6 277.8 L289.8 279 L289.2 280.3 L288.6 281.5 L288.2 282.7 L287.9 284 L287.8 285.2 L287.7 286.5 L287.8 287.7 L287.9 289 L288.3 290.2 L288.7 291.5 L289.2 292.8 L289.9 294 L290.7 295.3 L291.6 296.5 L292.6 297.8 L293.8 299 L295.1 300.2 L296.5 301.5 L298.1 302.7 L299.8 304 L301.6 305.2 L303.7 306.5 L306 307.8 L308.9 309.4 L311.9 311 L314.5 312.2 L316.9 313.3 L319.3 314.3 L321.6 315.2 L324 316 L326.3 316.8 L328.7 317.5 L331 318.1 L333.4 318.6 L335.8 319.1 L338.1 319.5 L340.5 319.8 L342.9 320.1 L345.3 320.3 L347.7 320.5 L350.1 320.5 L352.5 320.5 L354.8 320.5 L357.2 320.3 L359.6 320.1 L361.9 319.9 L364.2 319.5 L366.5 319.1 L368.8 318.7 L371.1 318.1 L373.3 317.5 L375.5 316.9 L377.8 316.1 L379.9 315.3 L382.1 314.4 L384.3 313.4 L386.5 312.3 L388.8 311.1Z M370.4 298.3 L372.4 297.1 L374.4 295.8 L376.2 294.5 L377.9 293.2 L379.6 291.9 L381.1 290.5 L382.4 289.2 L383.7 287.8 L384.8 286.5 L385.7 285.1 L386.6 283.8 L387.2 282.5 L387.7 281.1 L388.1 279.9 L388.3 278.6 L388.4 277.4 L388.3 276.3 L388 275.1 L387.6 274.1 L387.1 273.1 L386.4 272.1 L385.6 271.2 L384.6 270.4 L383.5 269.6 L382.3 268.9 L380.9 268.3 L379.4 267.8 L377.8 267.3 L376.1 266.9 L374.3 266.6 L372.4 266.4 L370.3 266.2 L368.3 266.2 L366.1 266.2 L363.9 266.3 L361.6 266.5 L359.3 266.7 L356.9 267.1 L354.5 267.5 L352.1 268 L349.7 268.6 L347.2 269.3 L344.8 270 L342.4 270.8 L340 271.7 L337.7 272.6 L335.3 273.6 L333.1 274.6 L330.9 275.7 L328.8 276.9 L326.7 278.1 L324.7 279.3 L322.9 280.5 L321.1 281.8 L319.4 283.2 L317.9 284.5 L316.4 285.8 L315.1 287.2 L314 288.6 L312.9 289.9 L312.1 291.3 L311.3 292.6 L310.7 293.9 L310.3 295.2 L310 296.5 L309.9 297.7 L309.9 298.9 L310.1 300.1 L310.4 301.2 L310.9 302.3 L311.6 303.3 L312.4 304.2 L313.4 305.1 L314.5 305.9 L315.7 306.6 L317.1 307.2 L318.6 307.8 L320.2 308.3 L322 308.7 L323.8 309 L325.8 309.3 L327.8 309.4 L330 309.5 L332.2 309.5 L334.5 309.4 L336.8 309.2 L339.2 308.9 L341.7 308.5 L344.2 308.1 L346.6 307.5 L349.1 306.9 L351.6 306.2 L354.1 305.4 L356.6 304.6 L359 303.7 L361.4 302.7 L363.8 301.7 L366 300.6 L368.2 299.5Z" fill="none" stroke="#2b2c06" stroke-width="1.2"/>
<path d="M386.7 259.2L386.3 265.7 M345.5 248.9L345.2 255.3 M306.3 259.1L306.1 265.5 M364.6 294.9L364.3 301.5 M332.3 302.9L332 309.5 M314.3 299L314 305.6 M315 281.1L314.7 287.6" fill="none" stroke="#3a3a10" stroke-width="1.1"/>
</g>
<path d="M392 303 L394.6 301.4 L396.7 300.1 L398.5 298.8 L400.2 297.6 L401.6 296.4 L403 295.1 L404.2 293.9 L405.2 292.7 L406.1 291.4 L407 290.2 L407.6 289 L408.2 287.7 L408.6 286.5 L408.9 285.2 L409.1 284 L409.2 282.7 L409.1 281.5 L409 280.2 L408.7 279 L408.3 277.7 L407.8 276.5 L407.1 275.2 L406.4 274 L405.5 272.8 L404.5 271.6 L403.4 270.4 L402.1 269.2 L400.8 268 L399.3 266.8 L397.7 265.6 L395.9 264.4 L394 263.2 L391.9 262 L389.6 260.7 L386.7 259.2 L383.7 257.8 L381.2 256.6 L378.8 255.6 L376.4 254.7 L374.1 253.8 L371.9 253.1 L369.6 252.4 L367.3 251.7 L365 251.2 L362.7 250.7 L360.4 250.2 L358.1 249.9 L355.9 249.6 L353.6 249.3 L351.3 249.1 L349 249 L346.7 248.9 L344.4 248.9 L342.1 249 L339.9 249.1 L337.6 249.3 L335.4 249.5 L333.1 249.8 L330.9 250.2 L328.7 250.6 L326.5 251.1 L324.3 251.7 L322.2 252.3 L320 253 L317.9 253.7 L315.7 254.6 L313.5 255.5 L311.4 256.5 L309.1 257.6 L306.3 259.1 L303.7 260.6 L301.6 261.8 L299.7 263 L298 264.2 L296.5 265.4 L295.1 266.6 L293.8 267.8 L292.7 268.9 L291.7 270.1 L290.8 271.3 L290 272.6 L289.4 273.8 L288.8 275 L288.4 276.2 L288.1 277.5 L288 278.7 L287.9 280 L288 281.2 L288.2 282.5 L288.5 283.7 L288.9 285 L289.4 286.3 L290.1 287.5 L290.9 288.8 L291.8 290 L292.8 291.2 L294 292.5 L295.3 293.7 L296.7 294.9 L298.3 296.2 L300 297.4 L301.9 298.7 L303.9 299.9 L306.2 301.3 L309.2 302.9 L312.2 304.4 L314.7 305.6 L317.2 306.7 L319.5 307.7 L321.9 308.6 L324.3 309.5 L326.6 310.2 L329 310.9 L331.3 311.5 L333.7 312 L336.1 312.5 L338.5 312.9 L340.9 313.3 L343.2 313.5 L345.6 313.7 L348 313.9 L350.4 314 L352.8 314 L355.2 313.9 L357.6 313.8 L359.9 313.6 L362.3 313.3 L364.6 313 L366.9 312.6 L369.2 312.1 L371.5 311.6 L373.7 311 L375.9 310.3 L378.2 309.6 L380.4 308.7 L382.5 307.8 L384.7 306.9 L387 305.8 L389.3 304.6Z M370.8 291.8 L372.8 290.6 L374.8 289.3 L376.6 288 L378.3 286.7 L380 285.4 L381.5 284 L382.8 282.7 L384.1 281.3 L385.2 280 L386.1 278.6 L387 277.3 L387.6 276 L388.1 274.7 L388.5 273.4 L388.7 272.2 L388.8 271 L388.7 269.8 L388.5 268.7 L388.1 267.6 L387.5 266.6 L386.8 265.6 L386 264.8 L385 263.9 L383.9 263.2 L382.7 262.5 L381.3 261.9 L379.8 261.3 L378.2 260.8 L376.5 260.5 L374.6 260.1 L372.7 259.9 L370.7 259.8 L368.6 259.7 L366.5 259.7 L364.2 259.8 L362 260 L359.6 260.3 L357.3 260.6 L354.9 261.1 L352.4 261.6 L350 262.2 L347.6 262.8 L345.1 263.6 L342.7 264.3 L340.3 265.2 L338 266.1 L335.6 267.1 L333.4 268.2 L331.2 269.3 L329 270.4 L327 271.6 L325 272.8 L323.1 274.1 L321.4 275.4 L319.7 276.7 L318.1 278 L316.7 279.3 L315.4 280.7 L314.2 282.1 L313.2 283.4 L312.3 284.8 L311.6 286.1 L311 287.4 L310.6 288.7 L310.3 290 L310.1 291.2 L310.2 292.4 L310.4 293.6 L310.7 294.7 L311.2 295.7 L311.9 296.7 L312.7 297.7 L313.6 298.5 L314.7 299.3 L316 300 L317.3 300.7 L318.9 301.3 L320.5 301.8 L322.2 302.2 L324.1 302.5 L326.1 302.7 L328.1 302.9 L330.3 303 L332.5 302.9 L334.8 302.8 L337.2 302.6 L339.6 302.3 L342 302 L344.5 301.5 L347 301 L349.5 300.4 L352 299.7 L354.5 298.9 L356.9 298.1 L359.4 297.2 L361.8 296.2 L364.1 295.2 L366.4 294.1 L368.6 293Z" fill="none" stroke="#2b2c06" stroke-width="1.25" stroke-linejoin="round"/>
<clipPath id="lc2"><path d="M506.5 321.9 L505.4 321 L504.4 320 L503.4 319.1 L502.4 318.2 L501.4 317.2 L500.4 316.3 L499.3 315.4 L498.2 314.6 L497.1 313.7 L496 312.9 L494.9 312 L493.7 311.2 L492.5 310.4 L491.3 309.6 L490.2 308.9 L489 308.2 L487.9 307.5 L486.8 306.9 L485.7 306.3 L484.6 305.8 L483.5 305.2 L482.4 304.7 L481.3 304.2 L480.1 303.6 L479 303.1 L477.8 302.6 L476.7 302.2 L475.5 301.7 L474.3 301.2 L473.2 300.8 L472 300.4 L470.9 300 L469.7 299.7 L468.6 299.3 L467.5 299 L466.4 298.7 L465.2 298.4 L464.1 298.2 L463 298 L461.9 297.7 L460.7 297.5 L459.6 297.3 L458.5 297.2 L457.3 297 L456.2 296.9 L455 296.8 L453.9 296.7 L452.8 296.6 L451.6 296.5 L450.5 296.4 L449.4 296.3 L448.3 296.2 L447.2 296.2 L446.1 296.2 L444.9 296.2 L443.7 296.2 L442.4 296.3 L441.1 296.3 L439.8 296.4 L438.4 296.5 L437.1 296.7 L435.7 296.9 L434.4 297.1 L433.1 297.4 L431.7 297.7 L430.4 298.1 L429 298.6 L427.7 299.1 L426.4 299.6 L425.1 300.1 L424 300.7 L422.9 301.3 L422 301.9 L421.1 302.5 L420.3 303.2 L419.6 303.9 L418.9 304.5 L418.3 305.3 L417.8 305.9 L417.4 306.6 L417 307.3 L416.8 308 L416.6 308.6 L416.6 309.3 L416.5 310 L416.6 310.6 L416.6 311.3 L416.7 311.9 L416.7 312.5 L416.9 313.1 L417 313.6 L417.2 314.2 L417.5 314.7 L417.7 315.3 L418 315.8 L418.3 316.4 L418.6 316.9 L418.9 317.5 L419.3 318 L419.6 318.6 L420 319.2 L420.5 319.7 L420.9 320.3 L421.4 320.9 L421.9 321.6 L422.4 322.2 L423 322.9 L423.6 323.6 L424.2 324.3 L424.8 325 L425.4 325.7 L426 326.4 L426.5 327.1 L427.1 327.9 L427.7 328.6 L428.3 329.4 L428.9 330.2 L429.4 330.9 L430 331.6 L430.5 332.3 L431 333 L431.5 333.7 L432 334.3 L432.5 334.9 L433 335.5 L433.4 336.1 L433.8 336.7 L434.2 337.3 L434.5 337.8 L434.8 338.4 L435.1 339 L435.3 339.6 L435.5 340.2 L435.7 340.7 L435.9 341.3 L436 341.8 L436 342.4 L436.1 342.9 L436.1 343.5 L436.1 344 L436 344.5 L435.9 345 L435.8 345.5 L435.6 346 L435.3 346.4 L435 346.8 L434.7 347.1 L434.3 347.5 L433.9 347.8 L433.4 348.1 L432.9 348.4 L432.4 348.7 L431.9 349 L431.2 349.2 L430.6 349.5 L429.9 349.7 L429.2 350 L428.4 350.2 L427.7 350.4 L426.9 350.5 L426 350.7 L425.2 350.9 L424.3 351 L423.3 351.1 L422.4 351.2 L421.4 351.3 L420.5 351.4 L419.6 351.4 L418.7 351.3 L417.8 351.3 L416.9 351.2 L416 351.1 L415.1 350.9 L414.2 350.8 L413.3 350.6 L412.4 350.5 L411.4 350.3 L410.5 350.1 L409.6 349.9 L408.7 349.7 L407.7 349.5 L406.8 349.2 L405.9 348.9 L405.1 348.7 L404.2 348.3 L403.3 348 L402.5 347.6 L401.7 347.3 L400.9 346.8 L400.1 346.4 L399.3 346 L398.6 345.5 L397.9 345 L397.3 344.5 L396.7 343.9 L396.1 343.3 L395.5 342.7 L395 342.2 L394.5 341.6 L394.1 341 L393.7 340.4 L393.4 339.8 L393.1 339.2 L392.9 338.6 L392.7 338.1 L392.5 337.5 L392.4 336.9 L392.3 336.4 L392.3 335.8 L392.3 335.3 L392.4 334.8 L392.5 334.2 L392.7 333.7 L392.9 333.2 L393.1 332.7 L393.3 332.3 L393.5 331.8 L393.8 331.4 L394 331 L394.3 330.7 L394.6 330.3 L395 329.9 L395.4 329.5 L395.9 329.1 L396.5 328.7 L397.2 328.2 L397.9 327.8 L398.7 327.3 L399.5 326.9 L400.3 326.4 L401 325.9 L401.8 325.5 L391.1 319.7 L371.3 331.4 L372 331.9 L372.7 332.5 L373.4 333.1 L374 333.6 L374.7 334.2 L375.4 334.8 L376.1 335.3 L376.9 336 L377.6 336.6 L378.4 337.3 L379.2 338 L379.9 338.7 L380.7 339.4 L381.5 340.1 L382.3 340.7 L383.1 341.4 L383.9 342.1 L384.8 342.7 L385.6 343.4 L386.4 344 L387.3 344.6 L388.1 345.3 L388.9 345.8 L389.6 346.4 L390.3 346.9 L391 347.4 L391.6 347.8 L392.2 348.2 L392.8 348.6 L393.5 349 L394.2 349.5 L395.1 350 L396 350.5 L397 351.1 L398.1 351.7 L399.2 352.2 L400.4 352.8 L401.7 353.4 L402.9 354 L404.2 354.6 L405.5 355.1 L406.9 355.7 L408.3 356.2 L409.8 356.7 L411.3 357.2 L412.8 357.7 L414.3 358.2 L415.8 358.7 L417.4 359.1 L419 359.5 L420.6 359.9 L422.2 360.2 L423.8 360.6 L425.4 360.9 L427 361.2 L428.6 361.4 L430.2 361.6 L431.7 361.8 L433.2 362 L434.8 362.2 L436.3 362.3 L437.8 362.4 L439.3 362.4 L440.8 362.4 L442.4 362.4 L444 362.3 L445.5 362.2 L447.1 362 L448.7 361.8 L450.2 361.6 L451.6 361.3 L453 361 L454.4 360.6 L455.7 360.2 L457 359.8 L458.3 359.3 L459.5 358.8 L460.7 358.3 L461.7 357.7 L462.7 357.1 L463.7 356.5 L464.6 355.8 L465.4 355.1 L466.2 354.3 L466.9 353.5 L467.5 352.8 L468.1 352 L468.5 351.3 L468.9 350.5 L469.1 349.8 L469.3 349.1 L469.4 348.4 L469.5 347.7 L469.4 347 L469.3 346.2 L469.2 345.5 L468.9 344.7 L468.6 344 L468.2 343.3 L467.7 342.5 L467.2 341.7 L466.7 340.9 L466.1 340.1 L465.5 339.2 L464.8 338.2 L464.1 337.2 L463.4 336.1 L462.6 335 L461.8 333.9 L461 332.8 L460.2 331.8 L459.5 330.9 L458.8 330.2 L458.2 329.5 L457.6 328.8 L457 328.3 L456.4 327.7 L455.8 327.1 L455.2 326.6 L454.6 326 L454 325.3 L453.3 324.7 L452.6 324 L452 323.4 L451.3 322.7 L450.6 322.1 L450 321.4 L449.4 320.8 L448.9 320.2 L448.3 319.5 L447.8 318.9 L447.2 318.3 L446.7 317.7 L446.3 317.1 L445.9 316.5 L445.7 315.9 L445.4 315.4 L445.3 314.9 L445.2 314.5 L445.2 314 L445.2 313.6 L445.3 313.1 L445.4 312.7 L445.6 312.3 L445.9 311.9 L446.3 311.5 L446.8 311.2 L447.3 310.8 L447.8 310.5 L448.4 310.1 L449 309.8 L449.7 309.5 L450.3 309.2 L451 309 L451.7 308.7 L452.5 308.5 L453.3 308.3 L454.1 308.1 L455 307.9 L456 307.7 L457.1 307.6 L458.3 307.5 L459.6 307.3 L460.9 307.3 L462.2 307.2 L463.5 307.1 L464.8 307.1 L465.9 307.1 L467 307.2 L468 307.2 L468.9 307.3 L469.8 307.4 L470.7 307.6 L471.6 307.7 L472.4 307.9 L473.3 308.1 L474.1 308.2 L474.9 308.4 L475.6 308.6 L476.4 308.9 L477.1 309.1 L477.8 309.4 L478.5 309.7 L479.2 310 L479.8 310.4 L480.5 310.8 L481.1 311.2 L481.7 311.7 L482.3 312.1 L482.9 312.6 L483.4 313.1 L483.8 313.6 L484.2 314 L484.5 314.5 L484.8 314.9 L485 315.4 L485.2 315.9 L485.3 316.4 L485.4 316.8 L485.5 317.3 L485.5 317.8 L485.5 318.2 L485.5 318.7 L485.4 319.1 L485.2 319.6 L485.1 320.1 L484.9 320.5 L484.6 321 L484.3 321.4 L483.9 321.9 L483.5 322.4 L483 322.8 L482.5 323.3 L482 323.7 L481.5 324.2 L481 324.6 L480.5 324.9 L480.1 325.3 L479.6 325.6 L479.1 325.9 L478.6 326.2 L478.1 326.5 L477.7 326.9 L477.2 327.2 L488.8 332.7Z" clip-rule="evenodd"/></clipPath>
<g clip-path="url(#lc2)">
<path d="M506.5 321.9 L505.4 321 L504.4 320 L503.4 319.1 L502.4 318.2 L501.4 317.2 L500.4 316.3 L499.3 315.4 L498.2 314.6 L497.1 313.7 L496 312.9 L494.9 312 L493.7 311.2 L492.5 310.4 L491.3 309.6 L490.2 308.9 L489 308.2 L487.9 307.5 L486.8 306.9 L485.7 306.3 L484.6 305.8 L483.5 305.2 L482.4 304.7 L481.3 304.2 L480.1 303.6 L479 303.1 L477.8 302.6 L476.7 302.2 L475.5 301.7 L474.3 301.2 L473.2 300.8 L472 300.4 L470.9 300 L469.7 299.7 L468.6 299.3 L467.5 299 L466.4 298.7 L465.2 298.4 L464.1 298.2 L463 298 L461.9 297.7 L460.7 297.5 L459.6 297.3 L458.5 297.2 L457.3 297 L456.2 296.9 L455 296.8 L453.9 296.7 L452.8 296.6 L451.6 296.5 L450.5 296.4 L449.4 296.3 L448.3 296.2 L447.2 296.2 L446.1 296.2 L444.9 296.2 L443.7 296.2 L442.4 296.3 L441.1 296.3 L439.8 296.4 L438.4 296.5 L437.1 296.7 L435.7 296.9 L434.4 297.1 L433.1 297.4 L431.7 297.7 L430.4 298.1 L429 298.6 L427.7 299.1 L426.4 299.6 L425.1 300.1 L424 300.7 L422.9 301.3 L422 301.9 L421.1 302.5 L420.3 303.2 L419.6 303.9 L418.9 304.5 L418.3 305.3 L417.8 305.9 L417.4 306.6 L417 307.3 L416.8 308 L416.6 308.6 L416.6 309.3 L416.5 310 L416.6 310.6 L416.6 311.3 L416.7 311.9 L416.7 312.5 L416.9 313.1 L417 313.6 L417.2 314.2 L417.5 314.7 L417.7 315.3 L418 315.8 L418.3 316.4 L418.6 316.9 L418.9 317.5 L419.3 318 L419.6 318.6 L420 319.2 L420.5 319.7 L420.9 320.3 L421.4 320.9 L421.9 321.6 L422.4 322.2 L423 322.9 L423.6 323.6 L424.2 324.3 L424.8 325 L425.4 325.7 L426 326.4 L426.5 327.1 L427.1 327.9 L427.7 328.6 L428.3 329.4 L428.9 330.2 L429.4 330.9 L430 331.6 L430.5 332.3 L431 333 L431.5 333.7 L432 334.3 L432.5 334.9 L433 335.5 L433.4 336.1 L433.8 336.7 L434.2 337.3 L434.5 337.8 L434.8 338.4 L435.1 339 L435.3 339.6 L435.5 340.2 L435.7 340.7 L435.9 341.3 L436 341.8 L436 342.4 L436.1 342.9 L436.1 343.5 L436.1 344 L436 344.5 L435.9 345 L435.8 345.5 L435.6 346 L435.3 346.4 L435 346.8 L434.7 347.1 L434.3 347.5 L433.9 347.8 L433.4 348.1 L432.9 348.4 L432.4 348.7 L431.9 349 L431.2 349.2 L430.6 349.5 L429.9 349.7 L429.2 350 L428.4 350.2 L427.7 350.4 L426.9 350.5 L426 350.7 L425.2 350.9 L424.3 351 L423.3 351.1 L422.4 351.2 L421.4 351.3 L420.5 351.4 L419.6 351.4 L418.7 351.3 L417.8 351.3 L416.9 351.2 L416 351.1 L415.1 350.9 L414.2 350.8 L413.3 350.6 L412.4 350.5 L411.4 350.3 L410.5 350.1 L409.6 349.9 L408.7 349.7 L407.7 349.5 L406.8 349.2 L405.9 348.9 L405.1 348.7 L404.2 348.3 L403.3 348 L402.5 347.6 L401.7 347.3 L400.9 346.8 L400.1 346.4 L399.3 346 L398.6 345.5 L397.9 345 L397.3 344.5 L396.7 343.9 L396.1 343.3 L395.5 342.7 L395 342.2 L394.5 341.6 L394.1 341 L393.7 340.4 L393.4 339.8 L393.1 339.2 L392.9 338.6 L392.7 338.1 L392.5 337.5 L392.4 336.9 L392.3 336.4 L392.3 335.8 L392.3 335.3 L392.4 334.8 L392.5 334.2 L392.7 333.7 L392.9 333.2 L393.1 332.7 L393.3 332.3 L393.5 331.8 L393.8 331.4 L394 331 L394.3 330.7 L394.6 330.3 L395 329.9 L395.4 329.5 L395.9 329.1 L396.5 328.7 L397.2 328.2 L397.9 327.8 L398.7 327.3 L399.5 326.9 L400.3 326.4 L401 325.9 L401.8 325.5 L391.1 319.7 L371.3 331.4 L372 331.9 L372.7 332.5 L373.4 333.1 L374 333.6 L374.7 334.2 L375.4 334.8 L376.1 335.3 L376.9 336 L377.6 336.6 L378.4 337.3 L379.2 338 L379.9 338.7 L380.7 339.4 L381.5 340.1 L382.3 340.7 L383.1 341.4 L383.9 342.1 L384.8 342.7 L385.6 343.4 L386.4 344 L387.3 344.6 L388.1 345.3 L388.9 345.8 L389.6 346.4 L390.3 346.9 L391 347.4 L391.6 347.8 L392.2 348.2 L392.8 348.6 L393.5 349 L394.2 349.5 L395.1 350 L396 350.5 L397 351.1 L398.1 351.7 L399.2 352.2 L400.4 352.8 L401.7 353.4 L402.9 354 L404.2 354.6 L405.5 355.1 L406.9 355.7 L408.3 356.2 L409.8 356.7 L411.3 357.2 L412.8 357.7 L414.3 358.2 L415.8 358.7 L417.4 359.1 L419 359.5 L420.6 359.9 L422.2 360.2 L423.8 360.6 L425.4 360.9 L427 361.2 L428.6 361.4 L430.2 361.6 L431.7 361.8 L433.2 362 L434.8 362.2 L436.3 362.3 L437.8 362.4 L439.3 362.4 L440.8 362.4 L442.4 362.4 L444 362.3 L445.5 362.2 L447.1 362 L448.7 361.8 L450.2 361.6 L451.6 361.3 L453 361 L454.4 360.6 L455.7 360.2 L457 359.8 L458.3 359.3 L459.5 358.8 L460.7 358.3 L461.7 357.7 L462.7 357.1 L463.7 356.5 L464.6 355.8 L465.4 355.1 L466.2 354.3 L466.9 353.5 L467.5 352.8 L468.1 352 L468.5 351.3 L468.9 350.5 L469.1 349.8 L469.3 349.1 L469.4 348.4 L469.5 347.7 L469.4 347 L469.3 346.2 L469.2 345.5 L468.9 344.7 L468.6 344 L468.2 343.3 L467.7 342.5 L467.2 341.7 L466.7 340.9 L466.1 340.1 L465.5 339.2 L464.8 338.2 L464.1 337.2 L463.4 336.1 L462.6 335 L461.8 333.9 L461 332.8 L460.2 331.8 L459.5 330.9 L458.8 330.2 L458.2 329.5 L457.6 328.8 L457 328.3 L456.4 327.7 L455.8 327.1 L455.2 326.6 L454.6 326 L454 325.3 L453.3 324.7 L452.6 324 L452 323.4 L451.3 322.7 L450.6 322.1 L450 321.4 L449.4 320.8 L448.9 320.2 L448.3 319.5 L447.8 318.9 L447.2 318.3 L446.7 317.7 L446.3 317.1 L445.9 316.5 L445.7 315.9 L445.4 315.4 L445.3 314.9 L445.2 314.5 L445.2 314 L445.2 313.6 L445.3 313.1 L445.4 312.7 L445.6 312.3 L445.9 311.9 L446.3 311.5 L446.8 311.2 L447.3 310.8 L447.8 310.5 L448.4 310.1 L449 309.8 L449.7 309.5 L450.3 309.2 L451 309 L451.7 308.7 L452.5 308.5 L453.3 308.3 L454.1 308.1 L455 307.9 L456 307.7 L457.1 307.6 L458.3 307.5 L459.6 307.3 L460.9 307.3 L462.2 307.2 L463.5 307.1 L464.8 307.1 L465.9 307.1 L467 307.2 L468 307.2 L468.9 307.3 L469.8 307.4 L470.7 307.6 L471.6 307.7 L472.4 307.9 L473.3 308.1 L474.1 308.2 L474.9 308.4 L475.6 308.6 L476.4 308.9 L477.1 309.1 L477.8 309.4 L478.5 309.7 L479.2 310 L479.8 310.4 L480.5 310.8 L481.1 311.2 L481.7 311.7 L482.3 312.1 L482.9 312.6 L483.4 313.1 L483.8 313.6 L484.2 314 L484.5 314.5 L484.8 314.9 L485 315.4 L485.2 315.9 L485.3 316.4 L485.4 316.8 L485.5 317.3 L485.5 317.8 L485.5 318.2 L485.5 318.7 L485.4 319.1 L485.2 319.6 L485.1 320.1 L484.9 320.5 L484.6 321 L484.3 321.4 L483.9 321.9 L483.5 322.4 L483 322.8 L482.5 323.3 L482 323.7 L481.5 324.2 L481 324.6 L480.5 324.9 L480.1 325.3 L479.6 325.6 L479.1 325.9 L478.6 326.2 L478.1 326.5 L477.7 326.9 L477.2 327.2 L488.8 332.7Z M505.8 328.5 L504.8 327.5 L503.8 326.6 L502.8 325.7 L501.8 324.7 L500.7 323.8 L499.7 322.9 L498.7 322 L497.6 321.1 L496.5 320.3 L495.4 319.4 L494.2 318.6 L493 317.8 L491.9 317 L490.7 316.2 L489.6 315.5 L488.4 314.8 L487.3 314.1 L486.2 313.5 L485.1 312.9 L484 312.3 L482.9 311.8 L481.8 311.2 L480.6 310.7 L479.5 310.2 L478.4 309.7 L477.2 309.2 L476.1 308.7 L474.9 308.2 L473.7 307.8 L472.6 307.4 L471.4 306.9 L470.3 306.6 L469.1 306.2 L468 305.9 L466.9 305.6 L465.8 305.3 L464.7 305 L463.5 304.7 L462.4 304.5 L461.3 304.3 L460.2 304.1 L459 303.9 L457.9 303.7 L456.8 303.6 L455.6 303.4 L454.5 303.3 L453.3 303.2 L452.2 303.1 L451.1 303 L450 302.9 L448.9 302.8 L447.8 302.8 L446.7 302.7 L445.5 302.7 L444.4 302.7 L443.1 302.7 L441.9 302.8 L440.6 302.9 L439.3 302.9 L437.9 303.1 L436.6 303.2 L435.2 303.4 L433.9 303.6 L432.6 303.9 L431.2 304.3 L429.9 304.7 L428.5 305.1 L427.2 305.6 L425.9 306.1 L424.6 306.7 L423.5 307.2 L422.4 307.8 L421.5 308.4 L420.6 309 L419.8 309.7 L419.1 310.4 L418.4 311.1 L417.8 311.8 L417.3 312.5 L416.9 313.2 L416.6 313.9 L416.3 314.5 L416.2 315.2 L416.1 315.9 L416.1 316.6 L416.1 317.2 L416.1 317.9 L416.2 318.5 L416.3 319.1 L416.4 319.7 L416.5 320.2 L416.7 320.8 L417 321.3 L417.2 321.9 L417.5 322.4 L417.8 323 L418.1 323.5 L418.4 324.1 L418.8 324.6 L419.1 325.2 L419.5 325.7 L420 326.3 L420.4 326.9 L420.9 327.5 L421.4 328.2 L421.9 328.8 L422.5 329.5 L423.1 330.2 L423.7 330.9 L424.3 331.6 L424.9 332.3 L425.4 333 L426 333.7 L426.6 334.5 L427.2 335.2 L427.8 336 L428.4 336.8 L428.9 337.5 L429.5 338.3 L430 339 L430.5 339.6 L431 340.3 L431.5 340.9 L432 341.5 L432.5 342.1 L432.9 342.7 L433.3 343.3 L433.6 343.9 L434 344.5 L434.3 345.1 L434.5 345.6 L434.8 346.2 L435 346.8 L435.2 347.3 L435.3 347.9 L435.4 348.5 L435.5 349 L435.6 349.6 L435.6 350.1 L435.5 350.6 L435.5 351.2 L435.4 351.7 L435.2 352.1 L435 352.6 L434.8 353 L434.5 353.4 L434.2 353.8 L433.8 354.1 L433.4 354.4 L432.9 354.8 L432.4 355.1 L431.9 355.3 L431.3 355.6 L430.7 355.9 L430.1 356.2 L429.4 356.4 L428.7 356.6 L427.9 356.8 L427.1 357 L426.4 357.2 L425.5 357.4 L424.7 357.5 L423.7 357.7 L422.8 357.8 L421.9 357.9 L420.9 358 L420 358 L419.1 358 L418.2 358 L417.3 357.9 L416.4 357.9 L415.5 357.7 L414.6 357.6 L413.7 357.5 L412.8 357.3 L411.9 357.1 L411 356.9 L410 356.8 L409.1 356.6 L408.2 356.4 L407.3 356.1 L406.3 355.9 L405.5 355.6 L404.6 355.3 L403.7 355 L402.9 354.6 L402 354.3 L401.2 353.9 L400.4 353.5 L399.6 353.1 L398.9 352.6 L398.2 352.2 L397.5 351.7 L396.8 351.1 L396.2 350.6 L395.6 350 L395.1 349.4 L394.5 348.8 L394.1 348.2 L393.7 347.6 L393.3 347 L393 346.5 L392.7 345.9 L392.4 345.3 L392.2 344.7 L392.1 344.1 L391.9 343.5 L391.9 343 L391.8 342.5 L391.9 341.9 L392 341.4 L392.1 340.9 L392.2 340.3 L392.4 339.8 L392.6 339.4 L392.8 338.9 L393.1 338.5 L393.3 338 L393.6 337.7 L393.9 337.3 L394.2 336.9 L394.6 336.5 L395 336.1 L395.5 335.7 L396.1 335.3 L396.7 334.8 L397.5 334.4 L398.2 333.9 L399 333.5 L399.8 333 L400.6 332.5 L401.3 332.1 L390.7 326.3 L370.9 338 L371.6 338.6 L372.3 339.1 L373 339.7 L373.6 340.2 L374.3 340.8 L375 341.4 L375.7 342 L376.5 342.6 L377.2 343.2 L378 343.9 L378.8 344.6 L379.5 345.3 L380.3 346 L381.1 346.7 L381.9 347.4 L382.7 348.1 L383.5 348.7 L384.3 349.4 L385.2 350 L386 350.7 L386.8 351.3 L387.6 351.9 L388.4 352.5 L389.2 353 L389.9 353.6 L390.5 354 L391.1 354.5 L391.7 354.9 L392.4 355.3 L393 355.7 L393.8 356.2 L394.6 356.6 L395.6 357.2 L396.6 357.7 L397.7 358.3 L398.8 358.9 L400 359.5 L401.2 360.1 L402.4 360.7 L403.7 361.2 L405.1 361.8 L406.4 362.3 L407.9 362.9 L409.3 363.4 L410.8 363.9 L412.3 364.4 L413.8 364.9 L415.4 365.3 L416.9 365.8 L418.5 366.2 L420.1 366.6 L421.7 366.9 L423.3 367.3 L424.9 367.6 L426.5 367.8 L428.1 368.1 L429.7 368.3 L431.2 368.5 L432.7 368.7 L434.2 368.9 L435.7 369 L437.3 369.1 L438.8 369.1 L440.3 369.1 L441.8 369.1 L443.4 369 L445 368.8 L446.5 368.7 L448.1 368.5 L449.6 368.3 L451.1 368 L452.5 367.7 L453.8 367.3 L455.2 366.9 L456.5 366.5 L457.7 366 L458.9 365.5 L460.1 365 L461.2 364.4 L462.2 363.8 L463.1 363.1 L464 362.5 L464.8 361.7 L465.6 361 L466.3 360.2 L466.9 359.4 L467.5 358.7 L467.9 357.9 L468.3 357.2 L468.5 356.5 L468.7 355.8 L468.8 355.1 L468.9 354.3 L468.8 353.6 L468.7 352.9 L468.6 352.1 L468.3 351.4 L468 350.6 L467.6 349.9 L467.1 349.1 L466.6 348.4 L466.1 347.6 L465.5 346.7 L464.9 345.8 L464.3 344.9 L463.5 343.8 L462.8 342.7 L462 341.6 L461.2 340.5 L460.4 339.4 L459.6 338.5 L458.9 337.6 L458.3 336.8 L457.6 336.1 L457 335.5 L456.4 334.9 L455.9 334.3 L455.3 333.7 L454.7 333.2 L454.1 332.6 L453.4 331.9 L452.8 331.3 L452.1 330.6 L451.4 330 L450.7 329.3 L450.1 328.7 L449.5 328 L448.9 327.4 L448.3 326.8 L447.8 326.1 L447.2 325.5 L446.7 324.9 L446.2 324.2 L445.8 323.6 L445.4 323.1 L445.1 322.5 L444.9 322 L444.8 321.5 L444.7 321 L444.6 320.6 L444.7 320.1 L444.7 319.7 L444.9 319.3 L445.1 318.9 L445.4 318.5 L445.8 318.1 L446.2 317.7 L446.7 317.4 L447.3 317 L447.8 316.7 L448.5 316.4 L449.1 316.1 L449.8 315.8 L450.4 315.5 L451.2 315.3 L451.9 315 L452.7 314.8 L453.6 314.6 L454.5 314.4 L455.5 314.3 L456.5 314.1 L457.7 314 L459 313.9 L460.3 313.8 L461.7 313.7 L463 313.7 L464.2 313.7 L465.3 313.7 L466.4 313.7 L467.4 313.8 L468.3 313.9 L469.2 314 L470.1 314.1 L471 314.3 L471.8 314.4 L472.7 314.6 L473.5 314.8 L474.3 315 L475 315.2 L475.8 315.4 L476.5 315.7 L477.2 315.9 L477.9 316.2 L478.6 316.6 L479.2 316.9 L479.9 317.3 L480.5 317.8 L481.1 318.2 L481.7 318.7 L482.3 319.2 L482.8 319.7 L483.2 320.1 L483.6 320.6 L483.9 321 L484.1 321.5 L484.4 322 L484.6 322.5 L484.7 322.9 L484.8 323.4 L484.9 323.9 L484.9 324.3 L484.9 324.8 L484.8 325.3 L484.8 325.7 L484.6 326.2 L484.5 326.7 L484.2 327.1 L484 327.6 L483.7 328 L483.3 328.5 L482.8 329 L482.4 329.4 L481.9 329.9 L481.4 330.3 L480.9 330.8 L480.4 331.2 L479.9 331.5 L479.4 331.9 L479 332.2 L478.5 332.5 L478 332.8 L477.5 333.1 L477.1 333.5 L476.6 333.8 L488.1 339.3Z" fill-rule="evenodd" fill="url(#wallg)"/>
<path d="M505.8 328.5 L504.8 327.5 L503.8 326.6 L502.8 325.7 L501.8 324.7 L500.7 323.8 L499.7 322.9 L498.7 322 L497.6 321.1 L496.5 320.3 L495.4 319.4 L494.2 318.6 L493 317.8 L491.9 317 L490.7 316.2 L489.6 315.5 L488.4 314.8 L487.3 314.1 L486.2 313.5 L485.1 312.9 L484 312.3 L482.9 311.8 L481.8 311.2 L480.6 310.7 L479.5 310.2 L478.4 309.7 L477.2 309.2 L476.1 308.7 L474.9 308.2 L473.7 307.8 L472.6 307.4 L471.4 306.9 L470.3 306.6 L469.1 306.2 L468 305.9 L466.9 305.6 L465.8 305.3 L464.7 305 L463.5 304.7 L462.4 304.5 L461.3 304.3 L460.2 304.1 L459 303.9 L457.9 303.7 L456.8 303.6 L455.6 303.4 L454.5 303.3 L453.3 303.2 L452.2 303.1 L451.1 303 L450 302.9 L448.9 302.8 L447.8 302.8 L446.7 302.7 L445.5 302.7 L444.4 302.7 L443.1 302.7 L441.9 302.8 L440.6 302.9 L439.3 302.9 L437.9 303.1 L436.6 303.2 L435.2 303.4 L433.9 303.6 L432.6 303.9 L431.2 304.3 L429.9 304.7 L428.5 305.1 L427.2 305.6 L425.9 306.1 L424.6 306.7 L423.5 307.2 L422.4 307.8 L421.5 308.4 L420.6 309 L419.8 309.7 L419.1 310.4 L418.4 311.1 L417.8 311.8 L417.3 312.5 L416.9 313.2 L416.6 313.9 L416.3 314.5 L416.2 315.2 L416.1 315.9 L416.1 316.6 L416.1 317.2 L416.1 317.9 L416.2 318.5 L416.3 319.1 L416.4 319.7 L416.5 320.2 L416.7 320.8 L417 321.3 L417.2 321.9 L417.5 322.4 L417.8 323 L418.1 323.5 L418.4 324.1 L418.8 324.6 L419.1 325.2 L419.5 325.7 L420 326.3 L420.4 326.9 L420.9 327.5 L421.4 328.2 L421.9 328.8 L422.5 329.5 L423.1 330.2 L423.7 330.9 L424.3 331.6 L424.9 332.3 L425.4 333 L426 333.7 L426.6 334.5 L427.2 335.2 L427.8 336 L428.4 336.8 L428.9 337.5 L429.5 338.3 L430 339 L430.5 339.6 L431 340.3 L431.5 340.9 L432 341.5 L432.5 342.1 L432.9 342.7 L433.3 343.3 L433.6 343.9 L434 344.5 L434.3 345.1 L434.5 345.6 L434.8 346.2 L435 346.8 L435.2 347.3 L435.3 347.9 L435.4 348.5 L435.5 349 L435.6 349.6 L435.6 350.1 L435.5 350.6 L435.5 351.2 L435.4 351.7 L435.2 352.1 L435 352.6 L434.8 353 L434.5 353.4 L434.2 353.8 L433.8 354.1 L433.4 354.4 L432.9 354.8 L432.4 355.1 L431.9 355.3 L431.3 355.6 L430.7 355.9 L430.1 356.2 L429.4 356.4 L428.7 356.6 L427.9 356.8 L427.1 357 L426.4 357.2 L425.5 357.4 L424.7 357.5 L423.7 357.7 L422.8 357.8 L421.9 357.9 L420.9 358 L420 358 L419.1 358 L418.2 358 L417.3 357.9 L416.4 357.9 L415.5 357.7 L414.6 357.6 L413.7 357.5 L412.8 357.3 L411.9 357.1 L411 356.9 L410 356.8 L409.1 356.6 L408.2 356.4 L407.3 356.1 L406.3 355.9 L405.5 355.6 L404.6 355.3 L403.7 355 L402.9 354.6 L402 354.3 L401.2 353.9 L400.4 353.5 L399.6 353.1 L398.9 352.6 L398.2 352.2 L397.5 351.7 L396.8 351.1 L396.2 350.6 L395.6 350 L395.1 349.4 L394.5 348.8 L394.1 348.2 L393.7 347.6 L393.3 347 L393 346.5 L392.7 345.9 L392.4 345.3 L392.2 344.7 L392.1 344.1 L391.9 343.5 L391.9 343 L391.8 342.5 L391.9 341.9 L392 341.4 L392.1 340.9 L392.2 340.3 L392.4 339.8 L392.6 339.4 L392.8 338.9 L393.1 338.5 L393.3 338 L393.6 337.7 L393.9 337.3 L394.2 336.9 L394.6 336.5 L395 336.1 L395.5 335.7 L396.1 335.3 L396.7 334.8 L397.5 334.4 L398.2 333.9 L399 333.5 L399.8 333 L400.6 332.5 L401.3 332.1 L390.7 326.3 L370.9 338 L371.6 338.6 L372.3 339.1 L373 339.7 L373.6 340.2 L374.3 340.8 L375 341.4 L375.7 342 L376.5 342.6 L377.2 343.2 L378 343.9 L378.8 344.6 L379.5 345.3 L380.3 346 L381.1 346.7 L381.9 347.4 L382.7 348.1 L383.5 348.7 L384.3 349.4 L385.2 350 L386 350.7 L386.8 351.3 L387.6 351.9 L388.4 352.5 L389.2 353 L389.9 353.6 L390.5 354 L391.1 354.5 L391.7 354.9 L392.4 355.3 L393 355.7 L393.8 356.2 L394.6 356.6 L395.6 357.2 L396.6 357.7 L397.7 358.3 L398.8 358.9 L400 359.5 L401.2 360.1 L402.4 360.7 L403.7 361.2 L405.1 361.8 L406.4 362.3 L407.9 362.9 L409.3 363.4 L410.8 363.9 L412.3 364.4 L413.8 364.9 L415.4 365.3 L416.9 365.8 L418.5 366.2 L420.1 366.6 L421.7 366.9 L423.3 367.3 L424.9 367.6 L426.5 367.8 L428.1 368.1 L429.7 368.3 L431.2 368.5 L432.7 368.7 L434.2 368.9 L435.7 369 L437.3 369.1 L438.8 369.1 L440.3 369.1 L441.8 369.1 L443.4 369 L445 368.8 L446.5 368.7 L448.1 368.5 L449.6 368.3 L451.1 368 L452.5 367.7 L453.8 367.3 L455.2 366.9 L456.5 366.5 L457.7 366 L458.9 365.5 L460.1 365 L461.2 364.4 L462.2 363.8 L463.1 363.1 L464 362.5 L464.8 361.7 L465.6 361 L466.3 360.2 L466.9 359.4 L467.5 358.7 L467.9 357.9 L468.3 357.2 L468.5 356.5 L468.7 355.8 L468.8 355.1 L468.9 354.3 L468.8 353.6 L468.7 352.9 L468.6 352.1 L468.3 351.4 L468 350.6 L467.6 349.9 L467.1 349.1 L466.6 348.4 L466.1 347.6 L465.5 346.7 L464.9 345.8 L464.3 344.9 L463.5 343.8 L462.8 342.7 L462 341.6 L461.2 340.5 L460.4 339.4 L459.6 338.5 L458.9 337.6 L458.3 336.8 L457.6 336.1 L457 335.5 L456.4 334.9 L455.9 334.3 L455.3 333.7 L454.7 333.2 L454.1 332.6 L453.4 331.9 L452.8 331.3 L452.1 330.6 L451.4 330 L450.7 329.3 L450.1 328.7 L449.5 328 L448.9 327.4 L448.3 326.8 L447.8 326.1 L447.2 325.5 L446.7 324.9 L446.2 324.2 L445.8 323.6 L445.4 323.1 L445.1 322.5 L444.9 322 L444.8 321.5 L444.7 321 L444.6 320.6 L444.7 320.1 L444.7 319.7 L444.9 319.3 L445.1 318.9 L445.4 318.5 L445.8 318.1 L446.2 317.7 L446.7 317.4 L447.3 317 L447.8 316.7 L448.5 316.4 L449.1 316.1 L449.8 315.8 L450.4 315.5 L451.2 315.3 L451.9 315 L452.7 314.8 L453.6 314.6 L454.5 314.4 L455.5 314.3 L456.5 314.1 L457.7 314 L459 313.9 L460.3 313.8 L461.7 313.7 L463 313.7 L464.2 313.7 L465.3 313.7 L466.4 313.7 L467.4 313.8 L468.3 313.9 L469.2 314 L470.1 314.1 L471 314.3 L471.8 314.4 L472.7 314.6 L473.5 314.8 L474.3 315 L475 315.2 L475.8 315.4 L476.5 315.7 L477.2 315.9 L477.9 316.2 L478.6 316.6 L479.2 316.9 L479.9 317.3 L480.5 317.8 L481.1 318.2 L481.7 318.7 L482.3 319.2 L482.8 319.7 L483.2 320.1 L483.6 320.6 L483.9 321 L484.1 321.5 L484.4 322 L484.6 322.5 L484.7 322.9 L484.8 323.4 L484.9 323.9 L484.9 324.3 L484.9 324.8 L484.8 325.3 L484.8 325.7 L484.6 326.2 L484.5 326.7 L484.2 327.1 L484 327.6 L483.7 328 L483.3 328.5 L482.8 329 L482.4 329.4 L481.9 329.9 L481.4 330.3 L480.9 330.8 L480.4 331.2 L479.9 331.5 L479.4 331.9 L479 332.2 L478.5 332.5 L478 332.8 L477.5 333.1 L477.1 333.5 L476.6 333.8 L488.1 339.3Z" fill="none" stroke="#2b2c06" stroke-width="1.2"/>
<path d="M391.1 319.7L390.7 326.3 M401.8 325.5L401.3 332.1 M394.1 341L393.7 347.6 M405.1 348.7L404.6 355.3 M419.6 351.4L419.1 358 M432.4 348.7L431.9 355.3 M433.1 297.4L432.6 303.9 M480.1 303.6L479.5 310.2 M498.2 314.6L497.6 321.1 M454.6 326L454.1 332.6 M459.5 330.9L458.9 337.6 M465.5 339.2L464.9 345.8 M481 324.6L480.4 331.2 M477.2 327.2L476.6 333.8 M417.4 306.6L416.9 313.2" fill="none" stroke="#3a3a10" stroke-width="1.1"/>
</g>
<path d="M506.5 321.9 L505.4 321 L504.4 320 L503.4 319.1 L502.4 318.2 L501.4 317.2 L500.4 316.3 L499.3 315.4 L498.2 314.6 L497.1 313.7 L496 312.9 L494.9 312 L493.7 311.2 L492.5 310.4 L491.3 309.6 L490.2 308.9 L489 308.2 L487.9 307.5 L486.8 306.9 L485.7 306.3 L484.6 305.8 L483.5 305.2 L482.4 304.7 L481.3 304.2 L480.1 303.6 L479 303.1 L477.8 302.6 L476.7 302.2 L475.5 301.7 L474.3 301.2 L473.2 300.8 L472 300.4 L470.9 300 L469.7 299.7 L468.6 299.3 L467.5 299 L466.4 298.7 L465.2 298.4 L464.1 298.2 L463 298 L461.9 297.7 L460.7 297.5 L459.6 297.3 L458.5 297.2 L457.3 297 L456.2 296.9 L455 296.8 L453.9 296.7 L452.8 296.6 L451.6 296.5 L450.5 296.4 L449.4 296.3 L448.3 296.2 L447.2 296.2 L446.1 296.2 L444.9 296.2 L443.7 296.2 L442.4 296.3 L441.1 296.3 L439.8 296.4 L438.4 296.5 L437.1 296.7 L435.7 296.9 L434.4 297.1 L433.1 297.4 L431.7 297.7 L430.4 298.1 L429 298.6 L427.7 299.1 L426.4 299.6 L425.1 300.1 L424 300.7 L422.9 301.3 L422 301.9 L421.1 302.5 L420.3 303.2 L419.6 303.9 L418.9 304.5 L418.3 305.3 L417.8 305.9 L417.4 306.6 L417 307.3 L416.8 308 L416.6 308.6 L416.6 309.3 L416.5 310 L416.6 310.6 L416.6 311.3 L416.7 311.9 L416.7 312.5 L416.9 313.1 L417 313.6 L417.2 314.2 L417.5 314.7 L417.7 315.3 L418 315.8 L418.3 316.4 L418.6 316.9 L418.9 317.5 L419.3 318 L419.6 318.6 L420 319.2 L420.5 319.7 L420.9 320.3 L421.4 320.9 L421.9 321.6 L422.4 322.2 L423 322.9 L423.6 323.6 L424.2 324.3 L424.8 325 L425.4 325.7 L426 326.4 L426.5 327.1 L427.1 327.9 L427.7 328.6 L428.3 329.4 L428.9 330.2 L429.4 330.9 L430 331.6 L430.5 332.3 L431 333 L431.5 333.7 L432 334.3 L432.5 334.9 L433 335.5 L433.4 336.1 L433.8 336.7 L434.2 337.3 L434.5 337.8 L434.8 338.4 L435.1 339 L435.3 339.6 L435.5 340.2 L435.7 340.7 L435.9 341.3 L436 341.8 L436 342.4 L436.1 342.9 L436.1 343.5 L436.1 344 L436 344.5 L435.9 345 L435.8 345.5 L435.6 346 L435.3 346.4 L435 346.8 L434.7 347.1 L434.3 347.5 L433.9 347.8 L433.4 348.1 L432.9 348.4 L432.4 348.7 L431.9 349 L431.2 349.2 L430.6 349.5 L429.9 349.7 L429.2 350 L428.4 350.2 L427.7 350.4 L426.9 350.5 L426 350.7 L425.2 350.9 L424.3 351 L423.3 351.1 L422.4 351.2 L421.4 351.3 L420.5 351.4 L419.6 351.4 L418.7 351.3 L417.8 351.3 L416.9 351.2 L416 351.1 L415.1 350.9 L414.2 350.8 L413.3 350.6 L412.4 350.5 L411.4 350.3 L410.5 350.1 L409.6 349.9 L408.7 349.7 L407.7 349.5 L406.8 349.2 L405.9 348.9 L405.1 348.7 L404.2 348.3 L403.3 348 L402.5 347.6 L401.7 347.3 L400.9 346.8 L400.1 346.4 L399.3 346 L398.6 345.5 L397.9 345 L397.3 344.5 L396.7 343.9 L396.1 343.3 L395.5 342.7 L395 342.2 L394.5 341.6 L394.1 341 L393.7 340.4 L393.4 339.8 L393.1 339.2 L392.9 338.6 L392.7 338.1 L392.5 337.5 L392.4 336.9 L392.3 336.4 L392.3 335.8 L392.3 335.3 L392.4 334.8 L392.5 334.2 L392.7 333.7 L392.9 333.2 L393.1 332.7 L393.3 332.3 L393.5 331.8 L393.8 331.4 L394 331 L394.3 330.7 L394.6 330.3 L395 329.9 L395.4 329.5 L395.9 329.1 L396.5 328.7 L397.2 328.2 L397.9 327.8 L398.7 327.3 L399.5 326.9 L400.3 326.4 L401 325.9 L401.8 325.5 L391.1 319.7 L371.3 331.4 L372 331.9 L372.7 332.5 L373.4 333.1 L374 333.6 L374.7 334.2 L375.4 334.8 L376.1 335.3 L376.9 336 L377.6 336.6 L378.4 337.3 L379.2 338 L379.9 338.7 L380.7 339.4 L381.5 340.1 L382.3 340.7 L383.1 341.4 L383.9 342.1 L384.8 342.7 L385.6 343.4 L386.4 344 L387.3 344.6 L388.1 345.3 L388.9 345.8 L389.6 346.4 L390.3 346.9 L391 347.4 L391.6 347.8 L392.2 348.2 L392.8 348.6 L393.5 349 L394.2 349.5 L395.1 350 L396 350.5 L397 351.1 L398.1 351.7 L399.2 352.2 L400.4 352.8 L401.7 353.4 L402.9 354 L404.2 354.6 L405.5 355.1 L406.9 355.7 L408.3 356.2 L409.8 356.7 L411.3 357.2 L412.8 357.7 L414.3 358.2 L415.8 358.7 L417.4 359.1 L419 359.5 L420.6 359.9 L422.2 360.2 L423.8 360.6 L425.4 360.9 L427 361.2 L428.6 361.4 L430.2 361.6 L431.7 361.8 L433.2 362 L434.8 362.2 L436.3 362.3 L437.8 362.4 L439.3 362.4 L440.8 362.4 L442.4 362.4 L444 362.3 L445.5 362.2 L447.1 362 L448.7 361.8 L450.2 361.6 L451.6 361.3 L453 361 L454.4 360.6 L455.7 360.2 L457 359.8 L458.3 359.3 L459.5 358.8 L460.7 358.3 L461.7 357.7 L462.7 357.1 L463.7 356.5 L464.6 355.8 L465.4 355.1 L466.2 354.3 L466.9 353.5 L467.5 352.8 L468.1 352 L468.5 351.3 L468.9 350.5 L469.1 349.8 L469.3 349.1 L469.4 348.4 L469.5 347.7 L469.4 347 L469.3 346.2 L469.2 345.5 L468.9 344.7 L468.6 344 L468.2 343.3 L467.7 342.5 L467.2 341.7 L466.7 340.9 L466.1 340.1 L465.5 339.2 L464.8 338.2 L464.1 337.2 L463.4 336.1 L462.6 335 L461.8 333.9 L461 332.8 L460.2 331.8 L459.5 330.9 L458.8 330.2 L458.2 329.5 L457.6 328.8 L457 328.3 L456.4 327.7 L455.8 327.1 L455.2 326.6 L454.6 326 L454 325.3 L453.3 324.7 L452.6 324 L452 323.4 L451.3 322.7 L450.6 322.1 L450 321.4 L449.4 320.8 L448.9 320.2 L448.3 319.5 L447.8 318.9 L447.2 318.3 L446.7 317.7 L446.3 317.1 L445.9 316.5 L445.7 315.9 L445.4 315.4 L445.3 314.9 L445.2 314.5 L445.2 314 L445.2 313.6 L445.3 313.1 L445.4 312.7 L445.6 312.3 L445.9 311.9 L446.3 311.5 L446.8 311.2 L447.3 310.8 L447.8 310.5 L448.4 310.1 L449 309.8 L449.7 309.5 L450.3 309.2 L451 309 L451.7 308.7 L452.5 308.5 L453.3 308.3 L454.1 308.1 L455 307.9 L456 307.7 L457.1 307.6 L458.3 307.5 L459.6 307.3 L460.9 307.3 L462.2 307.2 L463.5 307.1 L464.8 307.1 L465.9 307.1 L467 307.2 L468 307.2 L468.9 307.3 L469.8 307.4 L470.7 307.6 L471.6 307.7 L472.4 307.9 L473.3 308.1 L474.1 308.2 L474.9 308.4 L475.6 308.6 L476.4 308.9 L477.1 309.1 L477.8 309.4 L478.5 309.7 L479.2 310 L479.8 310.4 L480.5 310.8 L481.1 311.2 L481.7 311.7 L482.3 312.1 L482.9 312.6 L483.4 313.1 L483.8 313.6 L484.2 314 L484.5 314.5 L484.8 314.9 L485 315.4 L485.2 315.9 L485.3 316.4 L485.4 316.8 L485.5 317.3 L485.5 317.8 L485.5 318.2 L485.5 318.7 L485.4 319.1 L485.2 319.6 L485.1 320.1 L484.9 320.5 L484.6 321 L484.3 321.4 L483.9 321.9 L483.5 322.4 L483 322.8 L482.5 323.3 L482 323.7 L481.5 324.2 L481 324.6 L480.5 324.9 L480.1 325.3 L479.6 325.6 L479.1 325.9 L478.6 326.2 L478.1 326.5 L477.7 326.9 L477.2 327.2 L488.8 332.7Z" fill="none" stroke="#2b2c06" stroke-width="1.25" stroke-linejoin="round"/>
<clipPath id="lc3"><path d="M607.2 372.1 L605.5 370.9 L603.7 369.7 L602 368.6 L600.3 367.4 L598.6 366.2 L596.9 365 L595.2 363.9 L593.4 362.8 L591.7 361.8 L590 360.7 L588.3 359.7 L586.6 358.7 L584.8 357.8 L583.1 356.8 L581.4 355.9 L579.6 355 L577.9 354.2 L576.1 353.3 L574.4 352.5 L572.6 351.8 L570.8 351 L569 350.3 L567.3 349.6 L565.5 348.9 L563.8 348.3 L562 347.6 L560.3 347 L558.5 346.5 L556.8 345.9 L555.1 345.4 L553.3 345 L551.6 344.5 L549.8 344.2 L548.1 343.8 L546.3 343.5 L544.6 343.2 L542.8 343 L541.1 342.7 L539.3 342.6 L537.6 342.4 L535.9 342.3 L534.1 342.2 L532.4 342.1 L530.7 342.1 L529 342.1 L527.2 342.2 L525.5 342.3 L523.8 342.4 L522 342.6 L520.3 342.8 L518.5 343.1 L516.8 343.4 L515 343.7 L513.2 344.1 L511.5 344.6 L509.8 345 L508 345.6 L506.3 346.2 L504.5 346.9 L502.8 347.6 L501.1 348.3 L499.4 349 L497.7 349.8 L496.1 350.6 L494.6 351.4 L493.1 352.2 L491.6 353 L490.2 353.9 L488.8 354.7 L487.4 355.6 L486.2 356.5 L485 357.4 L483.9 358.3 L482.9 359.3 L482 360.2 L481.1 361.2 L480.3 362.1 L479.5 363.1 L478.9 364.1 L478.2 365.1 L477.7 366.2 L477.2 367.2 L476.7 368.3 L476.3 369.4 L476 370.4 L475.8 371.5 L475.6 372.6 L475.5 373.7 L475.5 374.8 L475.6 375.8 L475.7 376.9 L476 377.9 L476.3 379 L476.6 380.1 L477.1 381.2 L477.6 382.3 L478.2 383.4 L478.8 384.5 L479.5 385.6 L480.3 386.8 L481.2 387.9 L482.1 389.1 L483.2 390.2 L484.3 391.4 L485.5 392.7 L486.8 393.9 L488.2 395.2 L489.7 396.5 L491.2 397.8 L492.7 399.1 L494.3 400.3 L495.9 401.5 L497.6 402.7 L499.3 403.8 L501 404.9 L502.8 406 L504.6 407.1 L506.4 408.1 L508.1 409.1 L509.9 410 L511.7 410.9 L513.4 411.8 L515.2 412.6 L516.9 413.4 L518.6 414.2 L520.4 414.9 L522.1 415.6 L523.8 416.2 L525.5 416.8 L527.1 417.3 L528.8 417.8 L530.4 418.2 L532 418.6 L533.6 418.9 L535.2 419.3 L536.9 419.8 L545.4 413.9 L543.7 413.5 L541.9 413.2 L540.1 412.8 L538.4 412.5 L536.6 412.1 L534.9 411.8 L533.2 411.3 L531.5 410.8 L529.9 410.3 L528.2 409.6 L526.6 409 L525 408.3 L523.4 407.5 L521.9 406.8 L520.5 406.1 L519.1 405.4 L517.8 404.7 L516.5 404.1 L515.2 403.4 L514.1 402.7 L512.9 402.1 L511.9 401.4 L510.8 400.7 L509.9 400 L509 399.3 L508.2 398.5 L507.5 397.8 L506.8 397.1 L506.2 396.3 L505.6 395.5 L505 394.8 L504.5 394 L504.1 393.2 L503.7 392.4 L503.3 391.6 L502.9 390.8 L502.6 389.9 L502.4 389.1 L502.4 388.2 L502.4 387.3 L502.5 386.5 L502.7 385.6 L503.1 384.7 L503.5 383.8 L503.9 382.8 L504.5 381.9 L505.2 380.9 L505.9 379.8 L506.7 378.8 L507.6 377.6 L508.6 376.5 L509.6 375.3 L510.8 374.1 L512 372.9 L513.2 371.7 L514.5 370.6 L515.9 369.5 L517.4 368.3 L518.9 367.2 L520.5 366.1 L522.1 365 L523.7 364 L525.3 363 L526.9 362.1 L528.4 361.2 L530 360.4 L531.5 359.7 L533.1 359 L534.6 358.3 L536.2 357.7 L537.7 357.2 L539.3 356.6 L540.8 356.2 L542.4 355.8 L544 355.4 L545.5 355.1 L547.1 354.8 L548.6 354.6 L550.1 354.5 L551.6 354.3 L553 354.3 L554.4 354.3 L555.7 354.3 L557.1 354.4 L558.4 354.5 L559.7 354.6 L561 354.8 L562.4 355.1 L563.8 355.3 L565.1 355.6 L566.6 356 L568 356.4 L569.3 356.8 L570.7 357.2 L572 357.7 L573.2 358.2 L574.3 358.7 L575.4 359.2 L576.5 359.8 L577.5 360.4 L578.5 361 L579.4 361.6 L580.3 362.2 L581 362.8 L581.7 363.5 L582.4 364.1 L582.9 364.8 L583.4 365.5 L583.9 366.2 L584.2 366.9 L584.5 367.6 L584.8 368.3 L584.9 368.9 L585 369.4 L585.1 370 L585.1 370.6 L584.9 371.1 L584.7 371.7 L584.4 372.2 L584 372.9 L583.5 373.5 L582.7 374.2 L581.9 374.9 L581 375.5 L580 376.2 L579 377 L578 377.7 L577.1 378.3 L588.7 384.4Z" clip-rule="evenodd"/></clipPath>
<g clip-path="url(#lc3)">
<path d="M607.2 372.1 L605.5 370.9 L603.7 369.7 L602 368.6 L600.3 367.4 L598.6 366.2 L596.9 365 L595.2 363.9 L593.4 362.8 L591.7 361.8 L590 360.7 L588.3 359.7 L586.6 358.7 L584.8 357.8 L583.1 356.8 L581.4 355.9 L579.6 355 L577.9 354.2 L576.1 353.3 L574.4 352.5 L572.6 351.8 L570.8 351 L569 350.3 L567.3 349.6 L565.5 348.9 L563.8 348.3 L562 347.6 L560.3 347 L558.5 346.5 L556.8 345.9 L555.1 345.4 L553.3 345 L551.6 344.5 L549.8 344.2 L548.1 343.8 L546.3 343.5 L544.6 343.2 L542.8 343 L541.1 342.7 L539.3 342.6 L537.6 342.4 L535.9 342.3 L534.1 342.2 L532.4 342.1 L530.7 342.1 L529 342.1 L527.2 342.2 L525.5 342.3 L523.8 342.4 L522 342.6 L520.3 342.8 L518.5 343.1 L516.8 343.4 L515 343.7 L513.2 344.1 L511.5 344.6 L509.8 345 L508 345.6 L506.3 346.2 L504.5 346.9 L502.8 347.6 L501.1 348.3 L499.4 349 L497.7 349.8 L496.1 350.6 L494.6 351.4 L493.1 352.2 L491.6 353 L490.2 353.9 L488.8 354.7 L487.4 355.6 L486.2 356.5 L485 357.4 L483.9 358.3 L482.9 359.3 L482 360.2 L481.1 361.2 L480.3 362.1 L479.5 363.1 L478.9 364.1 L478.2 365.1 L477.7 366.2 L477.2 367.2 L476.7 368.3 L476.3 369.4 L476 370.4 L475.8 371.5 L475.6 372.6 L475.5 373.7 L475.5 374.8 L475.6 375.8 L475.7 376.9 L476 377.9 L476.3 379 L476.6 380.1 L477.1 381.2 L477.6 382.3 L478.2 383.4 L478.8 384.5 L479.5 385.6 L480.3 386.8 L481.2 387.9 L482.1 389.1 L483.2 390.2 L484.3 391.4 L485.5 392.7 L486.8 393.9 L488.2 395.2 L489.7 396.5 L491.2 397.8 L492.7 399.1 L494.3 400.3 L495.9 401.5 L497.6 402.7 L499.3 403.8 L501 404.9 L502.8 406 L504.6 407.1 L506.4 408.1 L508.1 409.1 L509.9 410 L511.7 410.9 L513.4 411.8 L515.2 412.6 L516.9 413.4 L518.6 414.2 L520.4 414.9 L522.1 415.6 L523.8 416.2 L525.5 416.8 L527.1 417.3 L528.8 417.8 L530.4 418.2 L532 418.6 L533.6 418.9 L535.2 419.3 L536.9 419.8 L545.4 413.9 L543.7 413.5 L541.9 413.2 L540.1 412.8 L538.4 412.5 L536.6 412.1 L534.9 411.8 L533.2 411.3 L531.5 410.8 L529.9 410.3 L528.2 409.6 L526.6 409 L525 408.3 L523.4 407.5 L521.9 406.8 L520.5 406.1 L519.1 405.4 L517.8 404.7 L516.5 404.1 L515.2 403.4 L514.1 402.7 L512.9 402.1 L511.9 401.4 L510.8 400.7 L509.9 400 L509 399.3 L508.2 398.5 L507.5 397.8 L506.8 397.1 L506.2 396.3 L505.6 395.5 L505 394.8 L504.5 394 L504.1 393.2 L503.7 392.4 L503.3 391.6 L502.9 390.8 L502.6 389.9 L502.4 389.1 L502.4 388.2 L502.4 387.3 L502.5 386.5 L502.7 385.6 L503.1 384.7 L503.5 383.8 L503.9 382.8 L504.5 381.9 L505.2 380.9 L505.9 379.8 L506.7 378.8 L507.6 377.6 L508.6 376.5 L509.6 375.3 L510.8 374.1 L512 372.9 L513.2 371.7 L514.5 370.6 L515.9 369.5 L517.4 368.3 L518.9 367.2 L520.5 366.1 L522.1 365 L523.7 364 L525.3 363 L526.9 362.1 L528.4 361.2 L530 360.4 L531.5 359.7 L533.1 359 L534.6 358.3 L536.2 357.7 L537.7 357.2 L539.3 356.6 L540.8 356.2 L542.4 355.8 L544 355.4 L545.5 355.1 L547.1 354.8 L548.6 354.6 L550.1 354.5 L551.6 354.3 L553 354.3 L554.4 354.3 L555.7 354.3 L557.1 354.4 L558.4 354.5 L559.7 354.6 L561 354.8 L562.4 355.1 L563.8 355.3 L565.1 355.6 L566.6 356 L568 356.4 L569.3 356.8 L570.7 357.2 L572 357.7 L573.2 358.2 L574.3 358.7 L575.4 359.2 L576.5 359.8 L577.5 360.4 L578.5 361 L579.4 361.6 L580.3 362.2 L581 362.8 L581.7 363.5 L582.4 364.1 L582.9 364.8 L583.4 365.5 L583.9 366.2 L584.2 366.9 L584.5 367.6 L584.8 368.3 L584.9 368.9 L585 369.4 L585.1 370 L585.1 370.6 L584.9 371.1 L584.7 371.7 L584.4 372.2 L584 372.9 L583.5 373.5 L582.7 374.2 L581.9 374.9 L581 375.5 L580 376.2 L579 377 L578 377.7 L577.1 378.3 L588.7 384.4Z M606.3 378.8 L604.6 377.6 L602.8 376.4 L601.1 375.2 L599.4 374.1 L597.7 372.9 L596 371.7 L594.3 370.6 L592.6 369.5 L590.9 368.5 L589.1 367.4 L587.4 366.4 L585.7 365.4 L584 364.4 L582.3 363.5 L580.5 362.6 L578.8 361.7 L577.1 360.8 L575.3 360 L573.5 359.2 L571.8 358.4 L570 357.7 L568.2 356.9 L566.5 356.2 L564.7 355.6 L563 354.9 L561.2 354.3 L559.5 353.7 L557.8 353.1 L556 352.6 L554.3 352.1 L552.5 351.6 L550.8 351.2 L549.1 350.8 L547.3 350.4 L545.6 350.1 L543.8 349.8 L542.1 349.6 L540.3 349.4 L538.6 349.2 L536.9 349.1 L535.1 348.9 L533.4 348.8 L531.7 348.8 L530 348.7 L528.2 348.8 L526.5 348.8 L524.8 348.9 L523.1 349 L521.3 349.2 L519.6 349.4 L517.8 349.7 L516.1 350 L514.3 350.4 L512.6 350.8 L510.8 351.2 L509.1 351.7 L507.3 352.2 L505.6 352.8 L503.8 353.5 L502.1 354.2 L500.4 354.9 L498.7 355.7 L497.1 356.5 L495.5 357.2 L493.9 358 L492.4 358.8 L490.9 359.7 L489.5 360.5 L488.1 361.4 L486.8 362.3 L485.6 363.2 L484.4 364.1 L483.3 365 L482.3 365.9 L481.3 366.9 L480.5 367.8 L479.7 368.8 L478.9 369.8 L478.2 370.8 L477.6 371.8 L477 372.9 L476.5 373.9 L476.1 375 L475.7 376.1 L475.4 377.2 L475.2 378.2 L475 379.3 L474.9 380.4 L474.9 381.5 L475 382.5 L475.1 383.6 L475.3 384.7 L475.6 385.7 L476 386.8 L476.4 387.9 L476.9 389 L477.5 390.1 L478.2 391.2 L478.9 392.4 L479.7 393.5 L480.6 394.7 L481.5 395.8 L482.5 397 L483.6 398.2 L484.8 399.4 L486.1 400.7 L487.5 402 L489 403.3 L490.5 404.6 L492.1 405.9 L493.7 407.1 L495.3 408.3 L496.9 409.5 L498.6 410.6 L500.3 411.7 L502.1 412.8 L503.9 413.9 L505.7 414.9 L507.4 415.9 L509.2 416.8 L510.9 417.7 L512.7 418.6 L514.4 419.4 L516.2 420.2 L517.9 421 L519.6 421.7 L521.4 422.4 L523 423 L524.7 423.6 L526.4 424.1 L528 424.6 L529.6 425 L531.2 425.4 L532.9 425.7 L534.5 426.1 L536.1 426.6 L544.6 420.7 L542.9 420.3 L541.1 420 L539.4 419.6 L537.6 419.3 L535.8 418.9 L534.1 418.5 L532.4 418.1 L530.7 417.6 L529.1 417 L527.5 416.4 L525.8 415.7 L524.2 415 L522.7 414.3 L521.2 413.6 L519.7 412.9 L518.3 412.2 L517 411.5 L515.7 410.8 L514.5 410.2 L513.3 409.5 L512.2 408.8 L511.1 408.1 L510.1 407.5 L509.2 406.7 L508.3 406 L507.5 405.3 L506.8 404.6 L506.1 403.8 L505.5 403.1 L504.9 402.3 L504.3 401.5 L503.9 400.7 L503.4 399.9 L503 399.1 L502.6 398.3 L502.2 397.5 L501.9 396.7 L501.8 395.8 L501.7 395 L501.7 394.1 L501.8 393.2 L502 392.3 L502.4 391.4 L502.8 390.5 L503.2 389.6 L503.8 388.6 L504.5 387.6 L505.2 386.6 L506 385.5 L506.9 384.4 L507.9 383.2 L508.9 382 L510.1 380.8 L511.3 379.6 L512.5 378.4 L513.8 377.3 L515.2 376.2 L516.6 375 L518.2 373.9 L519.8 372.8 L521.4 371.7 L523 370.7 L524.6 369.7 L526.2 368.8 L527.7 367.9 L529.2 367.1 L530.8 366.4 L532.3 365.7 L533.9 365 L535.4 364.4 L537 363.8 L538.5 363.3 L540.1 362.9 L541.6 362.4 L543.2 362.1 L544.8 361.8 L546.3 361.5 L547.9 361.3 L549.4 361.1 L550.8 361 L552.2 360.9 L553.6 360.9 L555 360.9 L556.3 361 L557.6 361.2 L558.9 361.3 L560.2 361.5 L561.6 361.7 L562.9 362 L564.3 362.3 L565.7 362.7 L567.1 363.1 L568.5 363.5 L569.9 363.9 L571.1 364.4 L572.4 364.9 L573.5 365.4 L574.6 365.9 L575.7 366.5 L576.7 367 L577.7 367.6 L578.6 368.2 L579.4 368.9 L580.2 369.5 L580.9 370.1 L581.5 370.8 L582.1 371.5 L582.6 372.2 L583 372.9 L583.4 373.6 L583.7 374.3 L583.9 374.9 L584.1 375.6 L584.2 376.1 L584.2 376.7 L584.2 377.2 L584.1 377.8 L583.9 378.4 L583.6 378.9 L583.2 379.6 L582.6 380.2 L581.9 380.9 L581 381.6 L580.1 382.3 L579.1 383 L578.1 383.7 L577.2 384.4 L576.3 385.1 L587.8 391.2Z" fill-rule="evenodd" fill="url(#wallg)"/>
<path d="M606.3 378.8 L604.6 377.6 L602.8 376.4 L601.1 375.2 L599.4 374.1 L597.7 372.9 L596 371.7 L594.3 370.6 L592.6 369.5 L590.9 368.5 L589.1 367.4 L587.4 366.4 L585.7 365.4 L584 364.4 L582.3 363.5 L580.5 362.6 L578.8 361.7 L577.1 360.8 L575.3 360 L573.5 359.2 L571.8 358.4 L570 357.7 L568.2 356.9 L566.5 356.2 L564.7 355.6 L563 354.9 L561.2 354.3 L559.5 353.7 L557.8 353.1 L556 352.6 L554.3 352.1 L552.5 351.6 L550.8 351.2 L549.1 350.8 L547.3 350.4 L545.6 350.1 L543.8 349.8 L542.1 349.6 L540.3 349.4 L538.6 349.2 L536.9 349.1 L535.1 348.9 L533.4 348.8 L531.7 348.8 L530 348.7 L528.2 348.8 L526.5 348.8 L524.8 348.9 L523.1 349 L521.3 349.2 L519.6 349.4 L517.8 349.7 L516.1 350 L514.3 350.4 L512.6 350.8 L510.8 351.2 L509.1 351.7 L507.3 352.2 L505.6 352.8 L503.8 353.5 L502.1 354.2 L500.4 354.9 L498.7 355.7 L497.1 356.5 L495.5 357.2 L493.9 358 L492.4 358.8 L490.9 359.7 L489.5 360.5 L488.1 361.4 L486.8 362.3 L485.6 363.2 L484.4 364.1 L483.3 365 L482.3 365.9 L481.3 366.9 L480.5 367.8 L479.7 368.8 L478.9 369.8 L478.2 370.8 L477.6 371.8 L477 372.9 L476.5 373.9 L476.1 375 L475.7 376.1 L475.4 377.2 L475.2 378.2 L475 379.3 L474.9 380.4 L474.9 381.5 L475 382.5 L475.1 383.6 L475.3 384.7 L475.6 385.7 L476 386.8 L476.4 387.9 L476.9 389 L477.5 390.1 L478.2 391.2 L478.9 392.4 L479.7 393.5 L480.6 394.7 L481.5 395.8 L482.5 397 L483.6 398.2 L484.8 399.4 L486.1 400.7 L487.5 402 L489 403.3 L490.5 404.6 L492.1 405.9 L493.7 407.1 L495.3 408.3 L496.9 409.5 L498.6 410.6 L500.3 411.7 L502.1 412.8 L503.9 413.9 L505.7 414.9 L507.4 415.9 L509.2 416.8 L510.9 417.7 L512.7 418.6 L514.4 419.4 L516.2 420.2 L517.9 421 L519.6 421.7 L521.4 422.4 L523 423 L524.7 423.6 L526.4 424.1 L528 424.6 L529.6 425 L531.2 425.4 L532.9 425.7 L534.5 426.1 L536.1 426.6 L544.6 420.7 L542.9 420.3 L541.1 420 L539.4 419.6 L537.6 419.3 L535.8 418.9 L534.1 418.5 L532.4 418.1 L530.7 417.6 L529.1 417 L527.5 416.4 L525.8 415.7 L524.2 415 L522.7 414.3 L521.2 413.6 L519.7 412.9 L518.3 412.2 L517 411.5 L515.7 410.8 L514.5 410.2 L513.3 409.5 L512.2 408.8 L511.1 408.1 L510.1 407.5 L509.2 406.7 L508.3 406 L507.5 405.3 L506.8 404.6 L506.1 403.8 L505.5 403.1 L504.9 402.3 L504.3 401.5 L503.9 400.7 L503.4 399.9 L503 399.1 L502.6 398.3 L502.2 397.5 L501.9 396.7 L501.8 395.8 L501.7 395 L501.7 394.1 L501.8 393.2 L502 392.3 L502.4 391.4 L502.8 390.5 L503.2 389.6 L503.8 388.6 L504.5 387.6 L505.2 386.6 L506 385.5 L506.9 384.4 L507.9 383.2 L508.9 382 L510.1 380.8 L511.3 379.6 L512.5 378.4 L513.8 377.3 L515.2 376.2 L516.6 375 L518.2 373.9 L519.8 372.8 L521.4 371.7 L523 370.7 L524.6 369.7 L526.2 368.8 L527.7 367.9 L529.2 367.1 L530.8 366.4 L532.3 365.7 L533.9 365 L535.4 364.4 L537 363.8 L538.5 363.3 L540.1 362.9 L541.6 362.4 L543.2 362.1 L544.8 361.8 L546.3 361.5 L547.9 361.3 L549.4 361.1 L550.8 361 L552.2 360.9 L553.6 360.9 L555 360.9 L556.3 361 L557.6 361.2 L558.9 361.3 L560.2 361.5 L561.6 361.7 L562.9 362 L564.3 362.3 L565.7 362.7 L567.1 363.1 L568.5 363.5 L569.9 363.9 L571.1 364.4 L572.4 364.9 L573.5 365.4 L574.6 365.9 L575.7 366.5 L576.7 367 L577.7 367.6 L578.6 368.2 L579.4 368.9 L580.2 369.5 L580.9 370.1 L581.5 370.8 L582.1 371.5 L582.6 372.2 L583 372.9 L583.4 373.6 L583.7 374.3 L583.9 374.9 L584.1 375.6 L584.2 376.1 L584.2 376.7 L584.2 377.2 L584.1 377.8 L583.9 378.4 L583.6 378.9 L583.2 379.6 L582.6 380.2 L581.9 380.9 L581 381.6 L580.1 382.3 L579.1 383 L578.1 383.7 L577.2 384.4 L576.3 385.1 L587.8 391.2Z" fill="none" stroke="#2b2c06" stroke-width="1.2"/>
<path d="M607.2 372.1L606.3 378.8 M593.4 362.8L592.6 369.5 M551.6 344.5L550.8 351.2 M517 343.5L516.3 350.2 M496.1 350.6L495.5 357.2 M502.6 380.2L501.9 386.9 M504.5 394L503.9 400.7 M577.1 378.3L576.3 385.1 M584 372.9L583.2 379.6" fill="none" stroke="#3a3a10" stroke-width="1.1"/>
</g>
<path d="M607.2 372.1 L605.5 370.9 L603.7 369.7 L602 368.6 L600.3 367.4 L598.6 366.2 L596.9 365 L595.2 363.9 L593.4 362.8 L591.7 361.8 L590 360.7 L588.3 359.7 L586.6 358.7 L584.8 357.8 L583.1 356.8 L581.4 355.9 L579.6 355 L577.9 354.2 L576.1 353.3 L574.4 352.5 L572.6 351.8 L570.8 351 L569 350.3 L567.3 349.6 L565.5 348.9 L563.8 348.3 L562 347.6 L560.3 347 L558.5 346.5 L556.8 345.9 L555.1 345.4 L553.3 345 L551.6 344.5 L549.8 344.2 L548.1 343.8 L546.3 343.5 L544.6 343.2 L542.8 343 L541.1 342.7 L539.3 342.6 L537.6 342.4 L535.9 342.3 L534.1 342.2 L532.4 342.1 L530.7 342.1 L529 342.1 L527.2 342.2 L525.5 342.3 L523.8 342.4 L522 342.6 L520.3 342.8 L518.5 343.1 L516.8 343.4 L515 343.7 L513.2 344.1 L511.5 344.6 L509.8 345 L508 345.6 L506.3 346.2 L504.5 346.9 L502.8 347.6 L501.1 348.3 L499.4 349 L497.7 349.8 L496.1 350.6 L494.6 351.4 L493.1 352.2 L491.6 353 L490.2 353.9 L488.8 354.7 L487.4 355.6 L486.2 356.5 L485 357.4 L483.9 358.3 L482.9 359.3 L482 360.2 L481.1 361.2 L480.3 362.1 L479.5 363.1 L478.9 364.1 L478.2 365.1 L477.7 366.2 L477.2 367.2 L476.7 368.3 L476.3 369.4 L476 370.4 L475.8 371.5 L475.6 372.6 L475.5 373.7 L475.5 374.8 L475.6 375.8 L475.7 376.9 L476 377.9 L476.3 379 L476.6 380.1 L477.1 381.2 L477.6 382.3 L478.2 383.4 L478.8 384.5 L479.5 385.6 L480.3 386.8 L481.2 387.9 L482.1 389.1 L483.2 390.2 L484.3 391.4 L485.5 392.7 L486.8 393.9 L488.2 395.2 L489.7 396.5 L491.2 397.8 L492.7 399.1 L494.3 400.3 L495.9 401.5 L497.6 402.7 L499.3 403.8 L501 404.9 L502.8 406 L504.6 407.1 L506.4 408.1 L508.1 409.1 L509.9 410 L511.7 410.9 L513.4 411.8 L515.2 412.6 L516.9 413.4 L518.6 414.2 L520.4 414.9 L522.1 415.6 L523.8 416.2 L525.5 416.8 L527.1 417.3 L528.8 417.8 L530.4 418.2 L532 418.6 L533.6 418.9 L535.2 419.3 L536.9 419.8 L545.4 413.9 L543.7 413.5 L541.9 413.2 L540.1 412.8 L538.4 412.5 L536.6 412.1 L534.9 411.8 L533.2 411.3 L531.5 410.8 L529.9 410.3 L528.2 409.6 L526.6 409 L525 408.3 L523.4 407.5 L521.9 406.8 L520.5 406.1 L519.1 405.4 L517.8 404.7 L516.5 404.1 L515.2 403.4 L514.1 402.7 L512.9 402.1 L511.9 401.4 L510.8 400.7 L509.9 400 L509 399.3 L508.2 398.5 L507.5 397.8 L506.8 397.1 L506.2 396.3 L505.6 395.5 L505 394.8 L504.5 394 L504.1 393.2 L503.7 392.4 L503.3 391.6 L502.9 390.8 L502.6 389.9 L502.4 389.1 L502.4 388.2 L502.4 387.3 L502.5 386.5 L502.7 385.6 L503.1 384.7 L503.5 383.8 L503.9 382.8 L504.5 381.9 L505.2 380.9 L505.9 379.8 L506.7 378.8 L507.6 377.6 L508.6 376.5 L509.6 375.3 L510.8 374.1 L512 372.9 L513.2 371.7 L514.5 370.6 L515.9 369.5 L517.4 368.3 L518.9 367.2 L520.5 366.1 L522.1 365 L523.7 364 L525.3 363 L526.9 362.1 L528.4 361.2 L530 360.4 L531.5 359.7 L533.1 359 L534.6 358.3 L536.2 357.7 L537.7 357.2 L539.3 356.6 L540.8 356.2 L542.4 355.8 L544 355.4 L545.5 355.1 L547.1 354.8 L548.6 354.6 L550.1 354.5 L551.6 354.3 L553 354.3 L554.4 354.3 L555.7 354.3 L557.1 354.4 L558.4 354.5 L559.7 354.6 L561 354.8 L562.4 355.1 L563.8 355.3 L565.1 355.6 L566.6 356 L568 356.4 L569.3 356.8 L570.7 357.2 L572 357.7 L573.2 358.2 L574.3 358.7 L575.4 359.2 L576.5 359.8 L577.5 360.4 L578.5 361 L579.4 361.6 L580.3 362.2 L581 362.8 L581.7 363.5 L582.4 364.1 L582.9 364.8 L583.4 365.5 L583.9 366.2 L584.2 366.9 L584.5 367.6 L584.8 368.3 L584.9 368.9 L585 369.4 L585.1 370 L585.1 370.6 L584.9 371.1 L584.7 371.7 L584.4 372.2 L584 372.9 L583.5 373.5 L582.7 374.2 L581.9 374.9 L581 375.5 L580 376.2 L579 377 L578 377.7 L577.1 378.3 L588.7 384.4Z" fill="none" stroke="#2b2c06" stroke-width="1.25" stroke-linejoin="round"/>
<clipPath id="lc4"><path d="M693.2 456.7 L695.7 454.8 L697.7 453.2 L699.4 451.6 L701 450.1 L702.3 448.6 L703.5 447.1 L704.5 445.6 L705.4 444.1 L706.2 442.6 L706.8 441.1 L707.3 439.6 L707.6 438.1 L707.8 436.6 L707.9 435 L707.8 433.5 L707.6 432 L707.2 430.5 L706.8 428.9 L706.2 427.4 L705.4 425.9 L704.6 424.4 L703.6 422.9 L702.5 421.4 L701.2 419.9 L699.9 418.4 L698.4 417 L696.7 415.5 L695 414.1 L693.1 412.6 L691 411.2 L688.9 409.7 L686.5 408.3 L683.9 406.8 L681.1 405.3 L677.5 403.5 L673.9 401.7 L670.9 400.3 L668 399.1 L665.3 398 L662.5 397 L659.8 396 L657.2 395.2 L654.5 394.4 L651.9 393.8 L649.3 393.2 L646.7 392.6 L644.1 392.2 L641.5 391.8 L638.9 391.5 L636.3 391.3 L633.8 391.1 L631.3 391 L628.8 391 L626.3 391.1 L623.8 391.3 L621.4 391.5 L618.9 391.8 L616.6 392.1 L614.2 392.6 L611.9 393.1 L609.6 393.7 L607.3 394.4 L605 395.1 L602.8 396 L600.6 396.9 L598.4 397.9 L596.3 399 L594.1 400.2 L591.8 401.6 L589.1 403.4 L586.5 405.2 L584.5 406.7 L582.7 408.2 L581.1 409.6 L579.7 411 L578.4 412.5 L577.2 413.9 L576.3 415.4 L575.4 416.8 L574.7 418.3 L574.1 419.8 L573.6 421.2 L573.3 422.7 L573.1 424.2 L573.1 425.7 L573.2 427.3 L573.4 428.8 L573.7 430.3 L574.2 431.8 L574.8 433.3 L575.5 434.9 L576.4 436.4 L577.4 437.9 L578.6 439.4 L579.8 441 L581.2 442.5 L582.8 444 L584.5 445.5 L586.3 447 L588.3 448.5 L590.5 450 L592.8 451.5 L595.3 453.1 L598.2 454.7 L601.8 456.6 L605.5 458.5 L608.5 460 L611.4 461.3 L614.3 462.6 L617.1 463.7 L619.9 464.7 L622.6 465.6 L625.4 466.4 L628.1 467.2 L630.9 467.8 L633.6 468.4 L636.3 468.9 L639 469.3 L641.7 469.6 L644.4 469.9 L647.1 470 L649.8 470.1 L652.4 470.1 L655 470.1 L657.6 469.9 L660.2 469.7 L662.7 469.3 L665.2 468.9 L667.6 468.4 L670.1 467.9 L672.5 467.2 L674.8 466.5 L677.1 465.6 L679.4 464.7 L681.6 463.7 L683.8 462.6 L686 461.4 L688.2 460.1 L690.5 458.6Z M663.2 442.1 L665.2 440.6 L667.1 439.1 L668.9 437.5 L670.5 435.9 L672.1 434.3 L673.5 432.6 L674.8 431 L675.9 429.4 L676.9 427.7 L677.7 426.1 L678.4 424.5 L679 422.9 L679.3 421.4 L679.5 419.9 L679.6 418.4 L679.5 417 L679.3 415.6 L678.8 414.3 L678.3 413.1 L677.6 411.9 L676.7 410.8 L675.7 409.7 L674.5 408.8 L673.3 407.9 L671.9 407.1 L670.3 406.4 L668.7 405.8 L666.9 405.3 L665 404.9 L663 404.6 L661 404.4 L658.8 404.3 L656.6 404.2 L654.3 404.3 L652 404.5 L649.6 404.8 L647.1 405.2 L644.7 405.6 L642.2 406.2 L639.7 406.9 L637.2 407.6 L634.7 408.5 L632.2 409.4 L629.7 410.4 L627.3 411.5 L624.9 412.6 L622.6 413.8 L620.3 415.1 L618.1 416.5 L616 417.9 L614 419.3 L612 420.8 L610.2 422.4 L608.5 423.9 L606.9 425.5 L605.4 427.2 L604.1 428.8 L602.9 430.4 L601.8 432.1 L600.9 433.7 L600.1 435.3 L599.5 436.9 L599 438.5 L598.7 440.1 L598.6 441.6 L598.6 443 L598.8 444.4 L599.2 445.8 L599.7 447.1 L600.4 448.3 L601.2 449.5 L602.2 450.6 L603.3 451.6 L604.6 452.5 L606 453.3 L607.5 454.1 L609.2 454.7 L611 455.3 L613 455.7 L615 456 L617.1 456.3 L619.3 456.4 L621.6 456.4 L624 456.3 L626.4 456.1 L628.9 455.8 L631.4 455.4 L634 454.9 L636.5 454.3 L639.1 453.6 L641.7 452.8 L644.3 451.9 L646.8 450.9 L649.3 449.9 L651.8 448.8 L654.2 447.5 L656.6 446.3 L658.9 444.9 L661.1 443.5Z" clip-rule="evenodd"/></clipPath>
<g clip-path="url(#lc4)">
<path d="M693.2 456.7 L695.7 454.8 L697.7 453.2 L699.4 451.6 L701 450.1 L702.3 448.6 L703.5 447.1 L704.5 445.6 L705.4 444.1 L706.2 442.6 L706.8 441.1 L707.3 439.6 L707.6 438.1 L707.8 436.6 L707.9 435 L707.8 433.5 L707.6 432 L707.2 430.5 L706.8 428.9 L706.2 427.4 L705.4 425.9 L704.6 424.4 L703.6 422.9 L702.5 421.4 L701.2 419.9 L699.9 418.4 L698.4 417 L696.7 415.5 L695 414.1 L693.1 412.6 L691 411.2 L688.9 409.7 L686.5 408.3 L683.9 406.8 L681.1 405.3 L677.5 403.5 L673.9 401.7 L670.9 400.3 L668 399.1 L665.3 398 L662.5 397 L659.8 396 L657.2 395.2 L654.5 394.4 L651.9 393.8 L649.3 393.2 L646.7 392.6 L644.1 392.2 L641.5 391.8 L638.9 391.5 L636.3 391.3 L633.8 391.1 L631.3 391 L628.8 391 L626.3 391.1 L623.8 391.3 L621.4 391.5 L618.9 391.8 L616.6 392.1 L614.2 392.6 L611.9 393.1 L609.6 393.7 L607.3 394.4 L605 395.1 L602.8 396 L600.6 396.9 L598.4 397.9 L596.3 399 L594.1 400.2 L591.8 401.6 L589.1 403.4 L586.5 405.2 L584.5 406.7 L582.7 408.2 L581.1 409.6 L579.7 411 L578.4 412.5 L577.2 413.9 L576.3 415.4 L575.4 416.8 L574.7 418.3 L574.1 419.8 L573.6 421.2 L573.3 422.7 L573.1 424.2 L573.1 425.7 L573.2 427.3 L573.4 428.8 L573.7 430.3 L574.2 431.8 L574.8 433.3 L575.5 434.9 L576.4 436.4 L577.4 437.9 L578.6 439.4 L579.8 441 L581.2 442.5 L582.8 444 L584.5 445.5 L586.3 447 L588.3 448.5 L590.5 450 L592.8 451.5 L595.3 453.1 L598.2 454.7 L601.8 456.6 L605.5 458.5 L608.5 460 L611.4 461.3 L614.3 462.6 L617.1 463.7 L619.9 464.7 L622.6 465.6 L625.4 466.4 L628.1 467.2 L630.9 467.8 L633.6 468.4 L636.3 468.9 L639 469.3 L641.7 469.6 L644.4 469.9 L647.1 470 L649.8 470.1 L652.4 470.1 L655 470.1 L657.6 469.9 L660.2 469.7 L662.7 469.3 L665.2 468.9 L667.6 468.4 L670.1 467.9 L672.5 467.2 L674.8 466.5 L677.1 465.6 L679.4 464.7 L681.6 463.7 L683.8 462.6 L686 461.4 L688.2 460.1 L690.5 458.6Z M663.2 442.1 L665.2 440.6 L667.1 439.1 L668.9 437.5 L670.5 435.9 L672.1 434.3 L673.5 432.6 L674.8 431 L675.9 429.4 L676.9 427.7 L677.7 426.1 L678.4 424.5 L679 422.9 L679.3 421.4 L679.5 419.9 L679.6 418.4 L679.5 417 L679.3 415.6 L678.8 414.3 L678.3 413.1 L677.6 411.9 L676.7 410.8 L675.7 409.7 L674.5 408.8 L673.3 407.9 L671.9 407.1 L670.3 406.4 L668.7 405.8 L666.9 405.3 L665 404.9 L663 404.6 L661 404.4 L658.8 404.3 L656.6 404.2 L654.3 404.3 L652 404.5 L649.6 404.8 L647.1 405.2 L644.7 405.6 L642.2 406.2 L639.7 406.9 L637.2 407.6 L634.7 408.5 L632.2 409.4 L629.7 410.4 L627.3 411.5 L624.9 412.6 L622.6 413.8 L620.3 415.1 L618.1 416.5 L616 417.9 L614 419.3 L612 420.8 L610.2 422.4 L608.5 423.9 L606.9 425.5 L605.4 427.2 L604.1 428.8 L602.9 430.4 L601.8 432.1 L600.9 433.7 L600.1 435.3 L599.5 436.9 L599 438.5 L598.7 440.1 L598.6 441.6 L598.6 443 L598.8 444.4 L599.2 445.8 L599.7 447.1 L600.4 448.3 L601.2 449.5 L602.2 450.6 L603.3 451.6 L604.6 452.5 L606 453.3 L607.5 454.1 L609.2 454.7 L611 455.3 L613 455.7 L615 456 L617.1 456.3 L619.3 456.4 L621.6 456.4 L624 456.3 L626.4 456.1 L628.9 455.8 L631.4 455.4 L634 454.9 L636.5 454.3 L639.1 453.6 L641.7 452.8 L644.3 451.9 L646.8 450.9 L649.3 449.9 L651.8 448.8 L654.2 447.5 L656.6 446.3 L658.9 444.9 L661.1 443.5Z M692 463.6 L694.6 461.7 L696.6 460 L698.3 458.5 L699.8 457 L701.2 455.5 L702.3 454 L703.4 452.5 L704.3 451 L705 449.5 L705.6 447.9 L706.1 446.4 L706.4 444.9 L706.6 443.4 L706.7 441.9 L706.6 440.3 L706.4 438.8 L706.1 437.3 L705.6 435.7 L705 434.2 L704.3 432.7 L703.4 431.2 L702.5 429.7 L701.3 428.2 L700.1 426.7 L698.7 425.2 L697.2 423.8 L695.6 422.3 L693.9 420.8 L692 419.4 L689.9 418 L687.7 416.5 L685.4 415.1 L682.8 413.6 L680 412.1 L676.4 410.3 L672.8 408.5 L669.8 407.1 L667 405.9 L664.2 404.7 L661.5 403.7 L658.8 402.8 L656.2 401.9 L653.5 401.2 L650.9 400.5 L648.3 399.9 L645.7 399.4 L643.1 398.9 L640.5 398.5 L637.9 398.2 L635.4 398 L632.8 397.9 L630.3 397.8 L627.8 397.8 L625.3 397.8 L622.9 398 L620.4 398.2 L618 398.5 L615.6 398.9 L613.3 399.3 L610.9 399.8 L608.6 400.4 L606.4 401.1 L604.1 401.9 L601.9 402.7 L599.7 403.6 L597.5 404.6 L595.4 405.8 L593.2 407 L590.9 408.4 L588.2 410.1 L585.6 412 L583.6 413.5 L581.8 415 L580.2 416.4 L578.8 417.8 L577.5 419.3 L576.4 420.7 L575.4 422.2 L574.5 423.6 L573.8 425.1 L573.2 426.6 L572.8 428 L572.5 429.5 L572.3 431 L572.2 432.6 L572.3 434.1 L572.5 435.6 L572.8 437.1 L573.3 438.6 L573.9 440.2 L574.7 441.7 L575.5 443.2 L576.5 444.8 L577.7 446.3 L578.9 447.8 L580.4 449.3 L581.9 450.8 L583.6 452.3 L585.4 453.8 L587.4 455.3 L589.6 456.9 L591.9 458.4 L594.4 459.9 L597.3 461.6 L600.9 463.5 L604.5 465.4 L607.6 466.9 L610.5 468.2 L613.3 469.4 L616.1 470.5 L618.9 471.6 L621.6 472.5 L624.4 473.3 L627.1 474.1 L629.9 474.7 L632.6 475.3 L635.3 475.8 L638 476.2 L640.7 476.5 L643.4 476.8 L646.1 476.9 L648.7 477 L651.3 477 L653.9 477 L656.5 476.8 L659.1 476.6 L661.6 476.2 L664.1 475.8 L666.5 475.3 L669 474.8 L671.3 474.1 L673.7 473.4 L676 472.5 L678.3 471.6 L680.5 470.6 L682.7 469.5 L684.9 468.3 L687.1 467 L689.4 465.5Z M662.1 448.9 L664.1 447.4 L666 445.9 L667.8 444.3 L669.5 442.7 L671 441.1 L672.4 439.5 L673.7 437.8 L674.8 436.2 L675.8 434.5 L676.6 432.9 L677.3 431.3 L677.9 429.7 L678.2 428.2 L678.5 426.7 L678.5 425.2 L678.4 423.8 L678.2 422.4 L677.8 421.1 L677.2 419.8 L676.5 418.7 L675.6 417.5 L674.6 416.5 L673.5 415.6 L672.2 414.7 L670.8 413.9 L669.3 413.2 L667.6 412.6 L665.8 412.1 L664 411.7 L662 411.4 L659.9 411.1 L657.8 411 L655.6 411 L653.3 411.1 L651 411.3 L648.6 411.6 L646.1 411.9 L643.7 412.4 L641.2 413 L638.7 413.6 L636.2 414.4 L633.7 415.2 L631.2 416.2 L628.7 417.2 L626.3 418.3 L623.9 419.4 L621.6 420.6 L619.4 421.9 L617.2 423.3 L615 424.7 L613 426.1 L611.1 427.6 L609.3 429.2 L607.5 430.8 L606 432.4 L604.5 434 L603.1 435.6 L601.9 437.3 L600.9 438.9 L599.9 440.5 L599.2 442.2 L598.6 443.8 L598.1 445.3 L597.8 446.9 L597.7 448.4 L597.7 449.9 L597.9 451.3 L598.2 452.7 L598.8 454 L599.4 455.2 L600.2 456.4 L601.2 457.5 L602.4 458.5 L603.6 459.4 L605 460.2 L606.6 460.9 L608.3 461.6 L610.1 462.1 L612 462.6 L614 462.9 L616.1 463.1 L618.3 463.3 L620.6 463.3 L623 463.2 L625.4 463 L627.9 462.7 L630.4 462.3 L633 461.8 L635.5 461.2 L638.1 460.5 L640.7 459.7 L643.2 458.8 L645.8 457.8 L648.3 456.8 L650.8 455.6 L653.2 454.4 L655.5 453.1 L657.8 451.8 L660 450.4Z" fill-rule="evenodd" fill="url(#wallg)"/>
<path d="M692 463.6 L694.6 461.7 L696.6 460 L698.3 458.5 L699.8 457 L701.2 455.5 L702.3 454 L703.4 452.5 L704.3 451 L705 449.5 L705.6 447.9 L706.1 446.4 L706.4 444.9 L706.6 443.4 L706.7 441.9 L706.6 440.3 L706.4 438.8 L706.1 437.3 L705.6 435.7 L705 434.2 L704.3 432.7 L703.4 431.2 L702.5 429.7 L701.3 428.2 L700.1 426.7 L698.7 425.2 L697.2 423.8 L695.6 422.3 L693.9 420.8 L692 419.4 L689.9 418 L687.7 416.5 L685.4 415.1 L682.8 413.6 L680 412.1 L676.4 410.3 L672.8 408.5 L669.8 407.1 L667 405.9 L664.2 404.7 L661.5 403.7 L658.8 402.8 L656.2 401.9 L653.5 401.2 L650.9 400.5 L648.3 399.9 L645.7 399.4 L643.1 398.9 L640.5 398.5 L637.9 398.2 L635.4 398 L632.8 397.9 L630.3 397.8 L627.8 397.8 L625.3 397.8 L622.9 398 L620.4 398.2 L618 398.5 L615.6 398.9 L613.3 399.3 L610.9 399.8 L608.6 400.4 L606.4 401.1 L604.1 401.9 L601.9 402.7 L599.7 403.6 L597.5 404.6 L595.4 405.8 L593.2 407 L590.9 408.4 L588.2 410.1 L585.6 412 L583.6 413.5 L581.8 415 L580.2 416.4 L578.8 417.8 L577.5 419.3 L576.4 420.7 L575.4 422.2 L574.5 423.6 L573.8 425.1 L573.2 426.6 L572.8 428 L572.5 429.5 L572.3 431 L572.2 432.6 L572.3 434.1 L572.5 435.6 L572.8 437.1 L573.3 438.6 L573.9 440.2 L574.7 441.7 L575.5 443.2 L576.5 444.8 L577.7 446.3 L578.9 447.8 L580.4 449.3 L581.9 450.8 L583.6 452.3 L585.4 453.8 L587.4 455.3 L589.6 456.9 L591.9 458.4 L594.4 459.9 L597.3 461.6 L600.9 463.5 L604.5 465.4 L607.6 466.9 L610.5 468.2 L613.3 469.4 L616.1 470.5 L618.9 471.6 L621.6 472.5 L624.4 473.3 L627.1 474.1 L629.9 474.7 L632.6 475.3 L635.3 475.8 L638 476.2 L640.7 476.5 L643.4 476.8 L646.1 476.9 L648.7 477 L651.3 477 L653.9 477 L656.5 476.8 L659.1 476.6 L661.6 476.2 L664.1 475.8 L666.5 475.3 L669 474.8 L671.3 474.1 L673.7 473.4 L676 472.5 L678.3 471.6 L680.5 470.6 L682.7 469.5 L684.9 468.3 L687.1 467 L689.4 465.5Z M662.1 448.9 L664.1 447.4 L666 445.9 L667.8 444.3 L669.5 442.7 L671 441.1 L672.4 439.5 L673.7 437.8 L674.8 436.2 L675.8 434.5 L676.6 432.9 L677.3 431.3 L677.9 429.7 L678.2 428.2 L678.5 426.7 L678.5 425.2 L678.4 423.8 L678.2 422.4 L677.8 421.1 L677.2 419.8 L676.5 418.7 L675.6 417.5 L674.6 416.5 L673.5 415.6 L672.2 414.7 L670.8 413.9 L669.3 413.2 L667.6 412.6 L665.8 412.1 L664 411.7 L662 411.4 L659.9 411.1 L657.8 411 L655.6 411 L653.3 411.1 L651 411.3 L648.6 411.6 L646.1 411.9 L643.7 412.4 L641.2 413 L638.7 413.6 L636.2 414.4 L633.7 415.2 L631.2 416.2 L628.7 417.2 L626.3 418.3 L623.9 419.4 L621.6 420.6 L619.4 421.9 L617.2 423.3 L615 424.7 L613 426.1 L611.1 427.6 L609.3 429.2 L607.5 430.8 L606 432.4 L604.5 434 L603.1 435.6 L601.9 437.3 L600.9 438.9 L599.9 440.5 L599.2 442.2 L598.6 443.8 L598.1 445.3 L597.8 446.9 L597.7 448.4 L597.7 449.9 L597.9 451.3 L598.2 452.7 L598.8 454 L599.4 455.2 L600.2 456.4 L601.2 457.5 L602.4 458.5 L603.6 459.4 L605 460.2 L606.6 460.9 L608.3 461.6 L610.1 462.1 L612 462.6 L614 462.9 L616.1 463.1 L618.3 463.3 L620.6 463.3 L623 463.2 L625.4 463 L627.9 462.7 L630.4 462.3 L633 461.8 L635.5 461.2 L638.1 460.5 L640.7 459.7 L643.2 458.8 L645.8 457.8 L648.3 456.8 L650.8 455.6 L653.2 454.4 L655.5 453.1 L657.8 451.8 L660 450.4Z" fill="none" stroke="#2b2c06" stroke-width="1.2"/>
<path d="M677.5 403.5L676.4 410.3 M630 391L629 397.8 M589.1 403.4L588.2 410.1 M657.1 446L656 452.8 M623.7 456.3L622.7 463.2 M604.1 452.2L603.1 459 M602.5 431L601.6 437.8" fill="none" stroke="#3a3a10" stroke-width="1.1"/>
</g>
<path d="M693.2 456.7 L695.7 454.8 L697.7 453.2 L699.4 451.6 L701 450.1 L702.3 448.6 L703.5 447.1 L704.5 445.6 L705.4 444.1 L706.2 442.6 L706.8 441.1 L707.3 439.6 L707.6 438.1 L707.8 436.6 L707.9 435 L707.8 433.5 L707.6 432 L707.2 430.5 L706.8 428.9 L706.2 427.4 L705.4 425.9 L704.6 424.4 L703.6 422.9 L702.5 421.4 L701.2 419.9 L699.9 418.4 L698.4 417 L696.7 415.5 L695 414.1 L693.1 412.6 L691 411.2 L688.9 409.7 L686.5 408.3 L683.9 406.8 L681.1 405.3 L677.5 403.5 L673.9 401.7 L670.9 400.3 L668 399.1 L665.3 398 L662.5 397 L659.8 396 L657.2 395.2 L654.5 394.4 L651.9 393.8 L649.3 393.2 L646.7 392.6 L644.1 392.2 L641.5 391.8 L638.9 391.5 L636.3 391.3 L633.8 391.1 L631.3 391 L628.8 391 L626.3 391.1 L623.8 391.3 L621.4 391.5 L618.9 391.8 L616.6 392.1 L614.2 392.6 L611.9 393.1 L609.6 393.7 L607.3 394.4 L605 395.1 L602.8 396 L600.6 396.9 L598.4 397.9 L596.3 399 L594.1 400.2 L591.8 401.6 L589.1 403.4 L586.5 405.2 L584.5 406.7 L582.7 408.2 L581.1 409.6 L579.7 411 L578.4 412.5 L577.2 413.9 L576.3 415.4 L575.4 416.8 L574.7 418.3 L574.1 419.8 L573.6 421.2 L573.3 422.7 L573.1 424.2 L573.1 425.7 L573.2 427.3 L573.4 428.8 L573.7 430.3 L574.2 431.8 L574.8 433.3 L575.5 434.9 L576.4 436.4 L577.4 437.9 L578.6 439.4 L579.8 441 L581.2 442.5 L582.8 444 L584.5 445.5 L586.3 447 L588.3 448.5 L590.5 450 L592.8 451.5 L595.3 453.1 L598.2 454.7 L601.8 456.6 L605.5 458.5 L608.5 460 L611.4 461.3 L614.3 462.6 L617.1 463.7 L619.9 464.7 L622.6 465.6 L625.4 466.4 L628.1 467.2 L630.9 467.8 L633.6 468.4 L636.3 468.9 L639 469.3 L641.7 469.6 L644.4 469.9 L647.1 470 L649.8 470.1 L652.4 470.1 L655 470.1 L657.6 469.9 L660.2 469.7 L662.7 469.3 L665.2 468.9 L667.6 468.4 L670.1 467.9 L672.5 467.2 L674.8 466.5 L677.1 465.6 L679.4 464.7 L681.6 463.7 L683.8 462.6 L686 461.4 L688.2 460.1 L690.5 458.6Z M663.2 442.1 L665.2 440.6 L667.1 439.1 L668.9 437.5 L670.5 435.9 L672.1 434.3 L673.5 432.6 L674.8 431 L675.9 429.4 L676.9 427.7 L677.7 426.1 L678.4 424.5 L679 422.9 L679.3 421.4 L679.5 419.9 L679.6 418.4 L679.5 417 L679.3 415.6 L678.8 414.3 L678.3 413.1 L677.6 411.9 L676.7 410.8 L675.7 409.7 L674.5 408.8 L673.3 407.9 L671.9 407.1 L670.3 406.4 L668.7 405.8 L666.9 405.3 L665 404.9 L663 404.6 L661 404.4 L658.8 404.3 L656.6 404.2 L654.3 404.3 L652 404.5 L649.6 404.8 L647.1 405.2 L644.7 405.6 L642.2 406.2 L639.7 406.9 L637.2 407.6 L634.7 408.5 L632.2 409.4 L629.7 410.4 L627.3 411.5 L624.9 412.6 L622.6 413.8 L620.3 415.1 L618.1 416.5 L616 417.9 L614 419.3 L612 420.8 L610.2 422.4 L608.5 423.9 L606.9 425.5 L605.4 427.2 L604.1 428.8 L602.9 430.4 L601.8 432.1 L600.9 433.7 L600.1 435.3 L599.5 436.9 L599 438.5 L598.7 440.1 L598.6 441.6 L598.6 443 L598.8 444.4 L599.2 445.8 L599.7 447.1 L600.4 448.3 L601.2 449.5 L602.2 450.6 L603.3 451.6 L604.6 452.5 L606 453.3 L607.5 454.1 L609.2 454.7 L611 455.3 L613 455.7 L615 456 L617.1 456.3 L619.3 456.4 L621.6 456.4 L624 456.3 L626.4 456.1 L628.9 455.8 L631.4 455.4 L634 454.9 L636.5 454.3 L639.1 453.6 L641.7 452.8 L644.3 451.9 L646.8 450.9 L649.3 449.9 L651.8 448.8 L654.2 447.5 L656.6 446.3 L658.9 444.9 L661.1 443.5Z" fill="none" stroke="#2b2c06" stroke-width="1.25" stroke-linejoin="round"/>

<g>
<!-- Z axis -->
<path d="M443.3 303 L447.3 250.5 L453.1 250.5 L449.3 303 Z" fill="#1212f5"/>
<ellipse cx="446.3" cy="303" rx="3" ry="1.6" fill="#2a2ad8"/>
<path d="M444.7 251.5 L450.6 233.8 L455.7 251.5 Z" fill="#1414f0"/>
<ellipse cx="450.2" cy="251.6" rx="5.5" ry="2" fill="#3c3ce0"/>
<!-- Y axis -->
<path d="M452.6 306.6 L492.3 284.2 L495.4 289.6 L455.7 312 Z" fill="#18e818"/>
<ellipse cx="454.2" cy="309.3" rx="1.8" ry="3.1" transform="rotate(-29 454.2 309.3)" fill="#2fd02f"/>
<path d="M490.6 281.2 L505 279.8 L496.6 291.6 Z" fill="#22e022"/>
<ellipse cx="493.7" cy="286.5" rx="2.2" ry="5.6" transform="rotate(-29 493.7 286.5)" fill="#3ed43e"/>
<!-- X axis -->
<path d="M457.4 320.3 L507.6 341.6 L505.2 347.2 L455 325.9 Z" fill="#f81010"/>
<ellipse cx="456.2" cy="323.1" rx="1.8" ry="3.1" transform="rotate(23 456.2 323.1)" fill="#e03a3a"/>
<path d="M508.3 338.6 L520 353.6 L502.2 350.8 Z" fill="#f51414"/>
<ellipse cx="505.4" cy="344.7" rx="2.2" ry="5.8" transform="rotate(23 505.4 344.7)" fill="#e84a4a"/>
<!-- origin ball -->
<circle cx="445.6" cy="315.6" r="5.3" fill="#f1efec" stroke="#8f8577" stroke-width="1"/>
<path d="M445.9 311 L445.3 320.3" stroke="#c9d3d8" stroke-width="0.8"/>
<!-- labels -->
<path d="M449 215.6 H455.4 L449.2 223.4 H455.6" fill="none" stroke="#1a1af0" stroke-width="1.5"/>
<path d="M512 270 L515.4 273.8 L519 269.6 M515.4 273.8 L515 278" fill="none" stroke="#2fcf2f" stroke-width="1.5"/>
<path d="M530.2 356.4 L536.8 364.6 M536.6 356.4 L530.4 364.6" fill="none" stroke="#f01818" stroke-width="1.5"/>
</g>


<defs><filter id="vcblur" x="-50%" y="-50%" width="200%" height="200%"><feGaussianBlur stdDeviation="6"/></filter>
<linearGradient id="vcf" x1="0" y1="0" x2="0" y2="1"><stop offset="0" stop-color="#f0f0f0"/><stop offset="1" stop-color="#e2e2e2"/></linearGradient>
<linearGradient id="vcr" x1="0" y1="0" x2="0" y2="1"><stop offset="0" stop-color="#ececec"/><stop offset="1" stop-color="#dedede"/></linearGradient></defs>
<g>
<path d="M880 26 L913 56 L952 30 L948 8 L884 8 Z" fill="#000" opacity="0.17" filter="url(#vcblur)"/>
<path d="M877.1 -2 L879.6 30.1 L911.2 52.3 L911.2 10.8 L893 -2 Z" fill="url(#vcf)" fill-opacity="0.93"/>
<path d="M911.2 10.8 L911.2 52.3 L942.5 29 L944.3 -2 L930 -2 Z" fill="url(#vcr)" fill-opacity="0.93"/>
<path d="M891.9 -1 L911.2 10.8 L931.1 -1 Z" fill="#f4f4f4" fill-opacity="0.93"/>
<path d="M891.9 -0.5 L911.2 10.8 L931.1 -0.5 M911.2 10.8 L911.2 52.3" fill="none" stroke="#555" stroke-width="0.9"/>
<path d="M911.2 52.3 L942.5 29 L944.3 -1" fill="none" stroke="#9a9a9a" stroke-width="0.9"/>
<path d="M877.2 -1 L879.7 30.3" stroke="#4242f2" stroke-width="2.2" fill="none"/>
<path d="M879.6 30.6 L917.4 57.8" stroke="#f29595" stroke-width="2.8" fill="none"/>
<path d="M919.4 56.6 L926 66.6 M925.8 56.6 L919.6 66.6" stroke="#ff7a7a" stroke-width="1.7" fill="none"/>
<text transform="matrix(0.69 0.485 0 1 883.0 17.6)" font-family="Liberation Sans, sans-serif" font-size="10" font-weight="bold" fill="#9aa0a8" opacity="0.95">FRONT</text>
<text transform="matrix(0.70 -0.52 0 1 918.4 32.6)" font-family="Liberation Sans, sans-serif" font-size="10" font-weight="bold" fill="#9aa0a8" opacity="0.95">RIGHT</text>
</g>

</svg>

<div id="panel">
 <div class="title"><div class="minus"></div><div class="t">SETUP : SETUP1</div>
  <svg class="ff" width="11" height="8" viewBox="0 0 11 8"><path d="M0.5 0.5 L5 4 L0.5 7.5 Z M5.5 0.5 L10.2 4 L5.5 7.5 Z" fill="#2c2c2c"/></svg>
 </div>
 <div class="tabs">
  <div class="tabsel"></div>
  <div class="vsep" style="left:87.5px"></div><div class="vsep" style="left:116.5px"></div>
  <!-- icon 1: two boxes -->
  <svg class="ico" style="left:6px;top:6px" width="19" height="18" viewBox="0 0 19 18">
   <path d="M7.5 1.5 H15.5 V8 L12.5 11 H7.5 V4.5 Z" fill="#bcd9ee" stroke="#3f6f9a" stroke-width="1"/>
   <path d="M7.5 4.5 L10.5 1.8 M15.3 2 L12.4 4.8" stroke="#3f6f9a" stroke-width="0.8" fill="none"/>
   <path d="M1.5 8.5 L5 5 H12.5 V11.5 L9 15.5 H1.5 Z" fill="#eef0f2" stroke="#2e3e55" stroke-width="1.1"/>
   <path d="M1.5 8.5 H9 V15.5 M9 8.5 L12.5 5" stroke="#2e3e55" stroke-width="0.9" fill="none"/>
  </svg>
  <!-- icon 2: yellow cube -->
  <svg class="ico" style="left:35px;top:6px" width="18" height="18" viewBox="0 0 18 18">
   <path d="M1.5 5.5 L5 1.5 H16.5 V12 L13 16 H1.5 Z" fill="#e9cb3c" stroke="#b99a22" stroke-width="1"/>
   <path d="M13 5.5 L16.5 1.5 V12 L13 16 Z" fill="#c9a92a"/>
   <path d="M1.5 5.5 L5 1.5 H16.5 L13 5.5 Z" fill="#f3dc62"/>
   <path d="M1.5 5.5 H13 V16 M13 5.5 L16.5 1.5" stroke="#b2921c" stroke-width="0.8" fill="none"/>
  </svg>
  <!-- icon 3: move arrows -->
  <svg class="ico" style="left:65px;top:7px" width="15" height="15" viewBox="0 0 15 15">
   <path d="M7.5 1.5 V13.5 M1.5 7.5 H13.5" stroke="#222" stroke-width="1.3" fill="none"/>
   <path d="M7.5 0 L10 3 H5 Z M7.5 15 L10 12 H5 Z M0 7.5 L3 5 V10 Z M15 7.5 L12 5 V10 Z" fill="#222"/>
  </svg>
  <!-- icon 4: G1G2 -->
  <svg class="ico" style="left:94.6px;top:7.2px" width="13" height="16.4" viewBox="0 0 13 16.4">
   <rect x="0.55" y="0.55" width="11.9" height="15.3" fill="#e9f0f9" stroke="#1e2a3c" stroke-width="1.1"/>
   <text x="6.5" y="7.7" font-family="Liberation Sans, sans-serif" font-size="6.7" font-weight="bold" fill="#2b86f2" text-anchor="middle" letter-spacing="-0.3">G1</text>
   <text x="6.5" y="13.9" font-family="Liberation Sans, sans-serif" font-size="6.7" font-weight="bold" fill="#2b86f2" text-anchor="middle" letter-spacing="-0.3">G2</text>
  </svg>
 </div>
 <div class="tri" style="top:64.8px"></div><div class="hdr" style="top:61.5px">Stock</div>
 <div class="lbl" style="top:91.5px">Mode</div>
 <div class="dd" style="top:84px">
  <svg style="position:absolute;left:4px;top:5px" width="17" height="17" viewBox="0 0 17 17">
   <path d="M1 5 L4.5 1 H15.5 V12 L12 16 H1 Z" fill="#d9bd62" stroke="#9a7f2a" stroke-width="1"/>
   <rect x="3.4" y="6.4" width="7.4" height="7.4" rx="1" fill="#d6d6d6" stroke="#5a5a5a" stroke-width="0.9"/>
   <path d="M4.5 6.2 L6.5 4 H13.2 V11 L11 13.4" fill="#e8e8e8" stroke="#5a5a5a" stroke-width="0.8"/>
  </svg>
  <div class="tx" style="left:24.2px;width:53.4px;top:7.3px">Relative size box</div><div class="dots" style="top:7.3px">...</div><div class="arr"></div>
 </div>
 <div class="lbl" style="top:121.5px">Stock Offset Mode</div>
 <div class="dd" style="top:115px">
  <div class="tx" style="left:7.4px;width:70.5px;top:5.7px">No additional stock</div><div class="dots" style="top:5.7px">...</div><div class="arr" style="top:10.2px"></div>
 </div>
 <div class="hsep" style="left:2px;top:147.6px;width:233px"></div>
 <div class="tri" style="top:165.5px"></div><div class="hdr" style="top:161.5px">Stock Dimensions</div>
 <div class="lbl" style="top:191.5px">Stock Width (X)</div><div class="val" style="top:191.5px">50 mm</div>
 <div class="lbl" style="top:221.5px">Stock Depth (Y)</div><div class="val" style="top:221.5px">25 mm</div>
 <div class="lbl" style="top:251.5px">Stock Height (Z)</div><div class="val" style="top:251.5px">5 mm</div>
 <div class="hsep" style="left:0;top:274.2px;width:260px"></div>
 <div class="info"><svg width="12" height="12" viewBox="0 0 12 12"><circle cx="6" cy="3.1" r="1.15" fill="#fff"/><path d="M4.6 5 H7 V8.6 H7.9 V9.7 H4.3 V8.6 H5.2 V6 H4.6 Z" fill="#fff"/></svg></div>
 <div class="btn" style="left:107px">OK</div>
 <div class="btn" style="left:177px">Cancel</div>
</div>

</body></html>
